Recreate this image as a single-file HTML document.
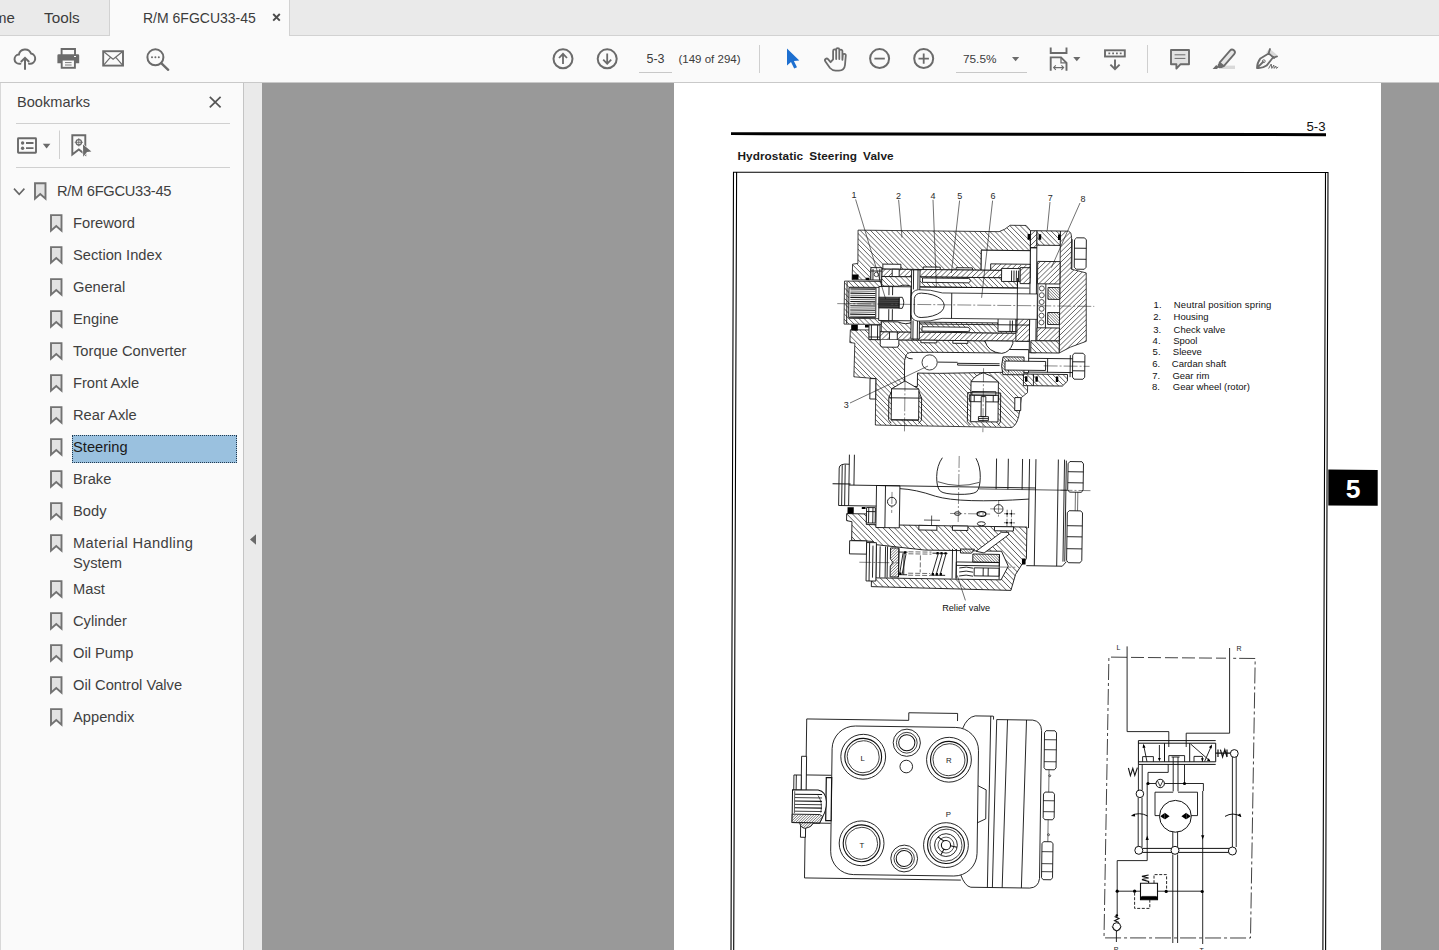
<!DOCTYPE html>
<html><head><meta charset="utf-8"><title>R/M 6FGCU33-45</title>
<style>
*{box-sizing:border-box;margin:0;padding:0}
html,body{width:1439px;height:950px;overflow:hidden;background:#999;font-family:"Liberation Sans",sans-serif;color:#3a3a3a}
.abs{position:absolute}
#tabbar{left:0;top:0;width:1439px;height:36px;background:#eaeaea;border-bottom:1px solid #d2d2d2}
#tab-active{left:109px;top:0;width:181px;height:36px;background:#fafafa;border-left:1px solid #d2d2d2;border-right:1px solid #d2d2d2}
.tabtxt{top:9px;font-size:15px;line-height:18px;color:#3c3c3c;white-space:nowrap}
#toolbar{left:0;top:36px;width:1439px;height:47px;background:#fafafa;border-bottom:1px solid #c9c9c9}
#sidebar{left:0;top:83px;width:244px;height:867px;background:#fafafa;border-right:1px solid #c4c4c4;border-left:1px solid #d8d8d8}
#splitter{left:244px;top:83px;width:18px;height:867px;background:#eaeaea}
#docbg{left:262px;top:83px;width:1177px;height:867px;background:#999}
#page{left:674px;top:83px;width:707px;height:867px;background:#fff}
.tbtxt{font-size:12.5px;color:#3c3c3c;white-space:nowrap;line-height:14px}
.bm{left:73px;font-size:14.7px;line-height:20px;color:#3f3f3f;white-space:nowrap}
.hr{left:16px;width:214px;height:1px;background:#d0d0d0}
svg{position:absolute;overflow:visible}
</style></head><body>
<div id="tabbar" class="abs"></div>
<div id="tab-active" class="abs"></div>
<div class="abs tabtxt" style="left:-6px">me</div>
<div class="abs tabtxt" style="left:44px;font-size:15.3px">Tools</div>
<div class="abs tabtxt" id="tabtitle" style="left:143px;font-size:14px">R/M 6FGCU33-45</div>
<div id="toolbar" class="abs"></div>
<div id="docbg" class="abs"></div>
<div id="page" class="abs"></div>
<div id="sidebar" class="abs"></div>
<div id="splitter" class="abs"></div>
<svg class="abs" style="left:0;top:0" width="1439" height="83" viewBox="0 0 1439 83">
<path d="M273.2,14 l6.6,6.6 M279.8,14 l-6.6,6.6" stroke="#4a4a4a" stroke-width="1.9"/>
<path d="M20.4,63.8 h-1 a4.6,4.6 0 0 1 -0.5,-9.2 a6.3,6.3 0 0 1 12.1,-1.1 a5.2,5.2 0 0 1 -1.1,10.3 h-0.9" fill="none" stroke="#6b6b6b" stroke-width="2" stroke-linecap="round"/><path d="M25,69.8 V58.4 M20.8,62 L25,57.8 L29.2,62" fill="none" stroke="#6b6b6b" stroke-width="2"/>
<path d="M61.6,55 V49 H75 V55" fill="none" stroke="#6b6b6b" stroke-width="1.9"/><path d="M57.4,55.4 a1.2,1.2 0 0 1 1.2,-1.2 h19.4 a1.2,1.2 0 0 1 1.2,1.2 v7.8 h-4.2 v-3.6 h-13.4 v3.6 h-4.2 z" fill="#6b6b6b"/><rect x="61.7" y="59.6" width="13.2" height="8.2" fill="#fafafa" stroke="#6b6b6b" stroke-width="1.9"/><path d="M65,62.6 h6.6 M65,65 h6.6" stroke="#6b6b6b" stroke-width="0.9"/><rect x="74" y="56" width="2" height="1" fill="#fafafa"/>
<rect x="103.2" y="51.2" width="19.8" height="14.4" fill="none" stroke="#6b6b6b" stroke-width="1.9"/><path d="M103.2,51.2 L113.1,59.2 L123,51.2 M103.2,65.6 L110.6,57.2 M123,65.6 L115.6,57.2" fill="none" stroke="#6b6b6b" stroke-width="1.2"/>
<circle cx="155.4" cy="57.3" r="8" fill="none" stroke="#6b6b6b" stroke-width="2"/><path d="M161.2,63.2 L168.2,69.8" stroke="#6b6b6b" stroke-width="2.4" stroke-linecap="round"/><circle cx="152" cy="57.3" r="1" fill="#6b6b6b"/><circle cx="155.4" cy="57.3" r="1" fill="#6b6b6b"/><circle cx="158.8" cy="57.3" r="1" fill="#6b6b6b"/>
<circle cx="563" cy="58.8" r="9.5" fill="none" stroke="#6b6b6b" stroke-width="2"/><path d="M563,64 V54 M559,58 L563,53.8 L567,58" fill="none" stroke="#6b6b6b" stroke-width="1.8"/>
<circle cx="607.2" cy="58.8" r="9.5" fill="none" stroke="#6b6b6b" stroke-width="2"/><path d="M607.2,53.6 V63.6 M603.2,59.6 L607.2,63.8 L611.2,59.6" fill="none" stroke="#6b6b6b" stroke-width="1.8"/>
<path d="M639,72.5 H672 M956,72.5 H1027" stroke="#c8c8c8" stroke-width="1"/><path d="M759.5,45 V73 M1147.5,45 V73" stroke="#cfcfcf" stroke-width="1"/>
<path d="M787,48.6 V65.6 L791,62 L794.2,68.6 L797,67.3 L793.9,60.9 L799.3,60.6 Z" fill="#1d6fd0"/>
<path d="M830.6,62.2 l-2.6,-3 a1.7,1.7 0 0 0 -2.6,2.2 l4.6,6.6 q2.4,2.6 5.6,2.6 h3.4 q5.4,0 6,-5.6 l0.8,-9.6 a1.5,1.5 0 0 0 -3,-0.2 l-0.4,4.6 v-8.6 a1.55,1.55 0 0 0 -3.1,0 v7.8 v-9.4 a1.55,1.55 0 0 0 -3.1,0 v9.4 v-8 a1.55,1.55 0 0 0 -3.1,0 v8.4 z" fill="none" stroke="#6b6b6b" stroke-width="1.8" stroke-linejoin="round"/>
<circle cx="879.6" cy="58.6" r="9.5" fill="none" stroke="#6b6b6b" stroke-width="2"/><path d="M874.4,58.6 h10.4" stroke="#6b6b6b" stroke-width="1.8"/><circle cx="923.7" cy="58.6" r="9.5" fill="none" stroke="#6b6b6b" stroke-width="2"/><path d="M918.5,58.6 h10.4 M923.7,53.4 v10.4" stroke="#6b6b6b" stroke-width="1.8"/>
<path d="M1012,57 h7.2 l-3.6,4.2 z M1073.2,57 h7.2 l-3.6,4.2 z" fill="#6b6b6b"/>
<path d="M1050.7,47.4 V53 H1066.5 V47.4" fill="none" stroke="#6b6b6b" stroke-width="1.9"/><path d="M1050.7,70.8 V57.4 H1061 L1066.5,62.8 V70.8" fill="none" stroke="#6b6b6b" stroke-width="1.9"/><path d="M1061,57.4 V62.8 H1066.5" fill="none" stroke="#6b6b6b" stroke-width="1.3"/><path d="M1053.6,67.6 H1063.6 M1055.8,65.4 L1053.6,67.6 L1055.8,69.8 M1061.4,65.4 L1063.6,67.6 L1061.4,69.8" fill="none" stroke="#6b6b6b" stroke-width="1.1"/>
<rect x="1105" y="50.3" width="19.8" height="6.2" fill="none" stroke="#6b6b6b" stroke-width="1.9"/><path d="M1108.4,53.4 h1.8 M1112.2,53.4 h1.8 M1116,53.4 h1.8 M1119.8,53.4 h1.8" stroke="#6b6b6b" stroke-width="1.6"/><path d="M1115,59.4 V69 M1110.4,64.6 L1115,69.2 L1119.6,64.6" fill="none" stroke="#6b6b6b" stroke-width="1.9"/>
<path d="M1171,50 H1189 V64.2 H1180.6 L1176.4,68.6 V64.2 H1171 Z" fill="#e2e2e2" stroke="#6b6b6b" stroke-width="1.9" stroke-linejoin="round"/><path d="M1174.6,54.8 h10.8 M1174.6,58.4 h10.8" stroke="#6b6b6b" stroke-width="1"/>
<rect x="1219" y="65.6" width="16" height="3.4" fill="#d9d9d9"/><path d="M1219.6,62.6 L1230,50.6 a2.7,2.7 0 0 1 4.2,3.6 L1223.8,66.2 Z" fill="#e6e6e6" stroke="#6b6b6b" stroke-width="1.8" stroke-linejoin="round"/><path d="M1219.2,62.4 l4.8,4 l-2,1.6 h-3.4 l-1.2,-1 l0.4,-2.6 z M1212.6,69 l3.6,-4 l2.4,2.2 l-1.6,1.8 z" fill="#6b6b6b"/>
<path d="M1269.4,48.6 l7.4,6.2 l-3.4,3.6 l-7.2,-6 z" fill="#d9d9d9"/><path d="M1270,49 l-1.4,4.4 l-8.2,5 q-3.4,4.6 -3.4,9.6 q5.4,0.6 9.6,-2.4 l6,-7.6 l4.4,-1.6 M1268.6,53.4 l5.6,4.6 M1257.4,67.6 l5.6,-5.6" fill="none" stroke="#6b6b6b" stroke-width="1.8" stroke-linejoin="round" stroke-linecap="round"/><circle cx="1263.8" cy="61.2" r="1.4" fill="none" stroke="#6b6b6b" stroke-width="1"/><path d="M1268.6,68.6 l2.6,-4.6 l0.6,4.4 l2,-3.4 l0.4,3.4 l1.6,-2.4 l0.6,2.4 l1.8,-1.4" fill="none" stroke="#6b6b6b" stroke-width="1"/>
</svg>
<div class="abs tbtxt" style="left:646.5px;top:52px">5-3</div>
<div class="abs tbtxt" style="left:678.5px;top:52px;font-size:11.5px">(149 of 294)</div>
<div class="abs tbtxt" style="left:963px;top:52px;font-size:11.8px">75.5%</div>
<!--ICONS-->
<svg class="abs" style="left:0;top:0" width="262" height="950" viewBox="0 0 262 950">
<path d="M209.8,96.8 L220.6,107.4 M220.6,96.8 L209.8,107.4" stroke="#555" stroke-width="1.7" fill="none"/>
<rect x="18" y="138.2" width="18" height="14.6" fill="none" stroke="#6a6a6a" stroke-width="1.9" rx="0.5"/><circle cx="22.6" cy="143" r="1.7" fill="#6a6a6a"/><circle cx="22.6" cy="148.2" r="1.7" fill="#6a6a6a"/><path d="M26,143 h7.5 M26,148.2 h7.5" stroke="#6a6a6a" stroke-width="1.8"/>
<path d="M42.8,143.8 h7.6 l-3.8,4.6 z" fill="#6a6a6a"/>
<path d="M59.5,130.5 V159" stroke="#d0d0d0" stroke-width="1"/>
<path d="M72.3,135.2 h13 v19.4 l-6.5,-5.2 l-6.5,5.2 z" fill="none" stroke="#6a6a6a" stroke-width="1.9"/><circle cx="78.8" cy="142.3" r="2.7" fill="none" stroke="#6a6a6a" stroke-width="1.3"/><path d="M78.8,138.2 v8.2 M74.7,142.3 h8.2" stroke="#6a6a6a" stroke-width="0.9"/><path d="M83,144.6 l8.4,6.8 l-4.4,0.7 l-3.8,4.6 z" fill="#6a6a6a" stroke="#fafafa" stroke-width="1.2" paint-order="stroke"/>
<path d="M14,188.6 l5.2,5.6 l5.2,-5.6" fill="none" stroke="#666" stroke-width="1.6"/>
<path d="M35,183.2 h10.5 v15.5 l-5.25,-4.6 l-5.25,4.6 z" fill="#e2e2e2" stroke="#727272" stroke-width="1.9" stroke-linejoin="miter"/>
<path d="M51,215.1 h10.5 v15.5 l-5.25,-4.6 l-5.25,4.6 z" fill="#e2e2e2" stroke="#727272" stroke-width="1.9" stroke-linejoin="miter"/>
<path d="M51,247.1 h10.5 v15.5 l-5.25,-4.6 l-5.25,4.6 z" fill="#e2e2e2" stroke="#727272" stroke-width="1.9" stroke-linejoin="miter"/>
<path d="M51,279.1 h10.5 v15.5 l-5.25,-4.6 l-5.25,4.6 z" fill="#e2e2e2" stroke="#727272" stroke-width="1.9" stroke-linejoin="miter"/>
<path d="M51,311.1 h10.5 v15.5 l-5.25,-4.6 l-5.25,4.6 z" fill="#e2e2e2" stroke="#727272" stroke-width="1.9" stroke-linejoin="miter"/>
<path d="M51,343.1 h10.5 v15.5 l-5.25,-4.6 l-5.25,4.6 z" fill="#e2e2e2" stroke="#727272" stroke-width="1.9" stroke-linejoin="miter"/>
<path d="M51,375.1 h10.5 v15.5 l-5.25,-4.6 l-5.25,4.6 z" fill="#e2e2e2" stroke="#727272" stroke-width="1.9" stroke-linejoin="miter"/>
<path d="M51,407.1 h10.5 v15.5 l-5.25,-4.6 l-5.25,4.6 z" fill="#e2e2e2" stroke="#727272" stroke-width="1.9" stroke-linejoin="miter"/>
<path d="M51,439.1 h10.5 v15.5 l-5.25,-4.6 l-5.25,4.6 z" fill="#e2e2e2" stroke="#727272" stroke-width="1.9" stroke-linejoin="miter"/>
<path d="M51,471.1 h10.5 v15.5 l-5.25,-4.6 l-5.25,4.6 z" fill="#e2e2e2" stroke="#727272" stroke-width="1.9" stroke-linejoin="miter"/>
<path d="M51,503.1 h10.5 v15.5 l-5.25,-4.6 l-5.25,4.6 z" fill="#e2e2e2" stroke="#727272" stroke-width="1.9" stroke-linejoin="miter"/>
<path d="M51,535.1 h10.5 v15.5 l-5.25,-4.6 l-5.25,4.6 z" fill="#e2e2e2" stroke="#727272" stroke-width="1.9" stroke-linejoin="miter"/>
<path d="M51,581.1 h10.5 v15.5 l-5.25,-4.6 l-5.25,4.6 z" fill="#e2e2e2" stroke="#727272" stroke-width="1.9" stroke-linejoin="miter"/>
<path d="M51,613.1 h10.5 v15.5 l-5.25,-4.6 l-5.25,4.6 z" fill="#e2e2e2" stroke="#727272" stroke-width="1.9" stroke-linejoin="miter"/>
<path d="M51,645.1 h10.5 v15.5 l-5.25,-4.6 l-5.25,4.6 z" fill="#e2e2e2" stroke="#727272" stroke-width="1.9" stroke-linejoin="miter"/>
<path d="M51,677.1 h10.5 v15.5 l-5.25,-4.6 l-5.25,4.6 z" fill="#e2e2e2" stroke="#727272" stroke-width="1.9" stroke-linejoin="miter"/>
<path d="M51,709.1 h10.5 v15.5 l-5.25,-4.6 l-5.25,4.6 z" fill="#e2e2e2" stroke="#727272" stroke-width="1.9" stroke-linejoin="miter"/>
<path d="M250,539.5 L256,534.3 V544.8 z" fill="#6a6a6a"/>
</svg>
<div class="abs" style="left:17px;top:92px;font-size:14.6px;line-height:20px;color:#3f3f3f">Bookmarks</div>
<div class="abs hr" style="top:123px"></div><div class="abs hr" style="top:167px"></div>
<div class="abs" style="left:72px;top:435px;width:165px;height:28px;background:#9ac1df;border:1px dotted #223a50"></div>
<div class="abs bm" style="left:57px;top:181px;letter-spacing:-0.3px">R/M 6FGCU33-45</div>
<div class="abs bm" style="top:213px">Foreword</div>
<div class="abs bm" style="top:245px">Section Index</div>
<div class="abs bm" style="top:277px">General</div>
<div class="abs bm" style="top:309px">Engine</div>
<div class="abs bm" style="top:341px">Torque Converter</div>
<div class="abs bm" style="top:373px">Front Axle</div>
<div class="abs bm" style="top:405px">Rear Axle</div>
<div class="abs bm" style="top:437px;color:#1a1a1a">Steering</div>
<div class="abs bm" style="top:469px">Brake</div>
<div class="abs bm" style="top:501px">Body</div>
<div class="abs bm" style="top:533px"><span style="letter-spacing:0.35px">Material Handling</span><br>System</div>
<div class="abs bm" style="top:579px">Mast</div>
<div class="abs bm" style="top:611px">Cylinder</div>
<div class="abs bm" style="top:643px">Oil Pump</div>
<div class="abs bm" style="top:675px">Oil Control Valve</div>
<div class="abs bm" style="top:707px">Appendix</div>
<!--SIDEBAR-->
<div class="abs" id="pagewrap" style="left:674px;top:83px;width:707px;height:867px;overflow:hidden">
<svg id="pg" style="left:-674px;top:-83px" width="1439" height="950" viewBox="0 0 1439 950" font-family="Liberation Sans, sans-serif">
<defs>
<path id="HA" d="M836.0,634.8L841.2,640.0M836.0,629.6L846.4,640.0M836.0,624.4L851.6,640.0M836.0,619.2L856.8,640.0M836.0,614.0L862.0,640.0M836.0,608.8L867.2,640.0M836.0,603.6L872.4,640.0M836.0,598.4L877.6,640.0M836.0,593.2L882.8,640.0M836.0,588.0L888.0,640.0M836.0,582.8L893.2,640.0M836.0,577.6L898.4,640.0M836.0,572.4L903.6,640.0M836.0,567.2L908.8,640.0M836.0,562.0L914.0,640.0M836.0,556.8L919.2,640.0M836.0,551.6L924.4,640.0M836.0,546.4L929.6,640.0M836.0,541.2L934.8,640.0M836.0,536.0L940.0,640.0M836.0,530.8L945.2,640.0M836.0,525.6L950.4,640.0M836.0,520.4L955.6,640.0M836.0,515.2L960.8,640.0M836.0,510.0L966.0,640.0M836.0,504.8L971.2,640.0M836.0,499.6L976.4,640.0M836.0,494.4L981.6,640.0M836.0,489.2L986.8,640.0M836.0,484.0L992.0,640.0M836.0,478.8L997.2,640.0M836.0,473.6L1002.4,640.0M836.0,468.4L1007.6,640.0M836.0,463.2L1012.8,640.0M836.0,458.0L1018.0,640.0M836.0,452.8L1023.2,640.0M836.0,447.6L1028.4,640.0M836.0,442.4L1033.6,640.0M836.0,437.2L1038.8,640.0M836.0,432.0L1044.0,640.0M836.0,426.8L1049.2,640.0M836.0,421.6L1054.4,640.0M836.0,416.4L1059.6,640.0M836.0,411.2L1064.8,640.0M836.0,406.0L1070.0,640.0M836.0,400.8L1075.2,640.0M836.0,395.6L1080.4,640.0M836.0,390.4L1085.6,640.0M836.0,385.2L1090.8,640.0M836.0,380.0L1096.0,640.0M836.0,374.8L1100.0,638.8M836.0,369.6L1100.0,633.6M836.0,364.4L1100.0,628.4M836.0,359.2L1100.0,623.2M836.0,354.0L1100.0,618.0M836.0,348.8L1100.0,612.8M836.0,343.6L1100.0,607.6M836.0,338.4L1100.0,602.4M836.0,333.2L1100.0,597.2M836.0,328.0L1100.0,592.0M836.0,322.8L1100.0,586.8M836.0,317.6L1100.0,581.6M836.0,312.4L1100.0,576.4M836.0,307.2L1100.0,571.2M836.0,302.0L1100.0,566.0M836.0,296.8L1100.0,560.8M836.0,291.6L1100.0,555.6M836.0,286.4L1100.0,550.4M836.0,281.2L1100.0,545.2M836.0,276.0L1100.0,540.0M836.0,270.8L1100.0,534.8M836.0,265.6L1100.0,529.6M836.0,260.4L1100.0,524.4M836.0,255.2L1100.0,519.2M836.0,250.0L1100.0,514.0M836.0,244.8L1100.0,508.8M836.0,239.6L1100.0,503.6M836.0,234.4L1100.0,498.4M836.0,229.2L1100.0,493.2M836.0,224.0L1100.0,488.0M837.2,220.0L1100.0,482.8M842.4,220.0L1100.0,477.6M847.6,220.0L1100.0,472.4M852.8,220.0L1100.0,467.2M858.0,220.0L1100.0,462.0M863.2,220.0L1100.0,456.8M868.4,220.0L1100.0,451.6M873.6,220.0L1100.0,446.4M878.8,220.0L1100.0,441.2M884.0,220.0L1100.0,436.0M889.2,220.0L1100.0,430.8M894.4,220.0L1100.0,425.6M899.6,220.0L1100.0,420.4M904.8,220.0L1100.0,415.2M910.0,220.0L1100.0,410.0M915.2,220.0L1100.0,404.8M920.4,220.0L1100.0,399.6M925.6,220.0L1100.0,394.4M930.8,220.0L1100.0,389.2M936.0,220.0L1100.0,384.0M941.2,220.0L1100.0,378.8M946.4,220.0L1100.0,373.6M951.6,220.0L1100.0,368.4M956.8,220.0L1100.0,363.2M962.0,220.0L1100.0,358.0M967.2,220.0L1100.0,352.8M972.4,220.0L1100.0,347.6M977.6,220.0L1100.0,342.4M982.8,220.0L1100.0,337.2M988.0,220.0L1100.0,332.0M993.2,220.0L1100.0,326.8M998.4,220.0L1100.0,321.6M1003.6,220.0L1100.0,316.4M1008.8,220.0L1100.0,311.2M1014.0,220.0L1100.0,306.0M1019.2,220.0L1100.0,300.8M1024.4,220.0L1100.0,295.6M1029.6,220.0L1100.0,290.4M1034.8,220.0L1100.0,285.2M1040.0,220.0L1100.0,280.0M1045.2,220.0L1100.0,274.8M1050.4,220.0L1100.0,269.6M1055.6,220.0L1100.0,264.4M1060.8,220.0L1100.0,259.2M1066.0,220.0L1100.0,254.0M1071.2,220.0L1100.0,248.8M1076.4,220.0L1100.0,243.6M1081.6,220.0L1100.0,238.4M1086.8,220.0L1100.0,233.2M1092.0,220.0L1100.0,228.0M1097.2,220.0L1100.0,222.8" stroke="#222" stroke-width="0.7" fill="none"/>
<path id="HB" d="M841.2,220.0L836.0,225.2M846.4,220.0L836.0,230.4M851.6,220.0L836.0,235.6M856.8,220.0L836.0,240.8M862.0,220.0L836.0,246.0M867.2,220.0L836.0,251.2M872.4,220.0L836.0,256.4M877.6,220.0L836.0,261.6M882.8,220.0L836.0,266.8M888.0,220.0L836.0,272.0M893.2,220.0L836.0,277.2M898.4,220.0L836.0,282.4M903.6,220.0L836.0,287.6M908.8,220.0L836.0,292.8M914.0,220.0L836.0,298.0M919.2,220.0L836.0,303.2M924.4,220.0L836.0,308.4M929.6,220.0L836.0,313.6M934.8,220.0L836.0,318.8M940.0,220.0L836.0,324.0M945.2,220.0L836.0,329.2M950.4,220.0L836.0,334.4M955.6,220.0L836.0,339.6M960.8,220.0L836.0,344.8M966.0,220.0L836.0,350.0M971.2,220.0L836.0,355.2M976.4,220.0L836.0,360.4M981.6,220.0L836.0,365.6M986.8,220.0L836.0,370.8M992.0,220.0L836.0,376.0M997.2,220.0L836.0,381.2M1002.4,220.0L836.0,386.4M1007.6,220.0L836.0,391.6M1012.8,220.0L836.0,396.8M1018.0,220.0L836.0,402.0M1023.2,220.0L836.0,407.2M1028.4,220.0L836.0,412.4M1033.6,220.0L836.0,417.6M1038.8,220.0L836.0,422.8M1044.0,220.0L836.0,428.0M1049.2,220.0L836.0,433.2M1054.4,220.0L836.0,438.4M1059.6,220.0L836.0,443.6M1064.8,220.0L836.0,448.8M1070.0,220.0L836.0,454.0M1075.2,220.0L836.0,459.2M1080.4,220.0L836.0,464.4M1085.6,220.0L836.0,469.6M1090.8,220.0L836.0,474.8M1096.0,220.0L836.0,480.0M1100.0,221.2L836.0,485.2M1100.0,226.4L836.0,490.4M1100.0,231.6L836.0,495.6M1100.0,236.8L836.0,500.8M1100.0,242.0L836.0,506.0M1100.0,247.2L836.0,511.2M1100.0,252.4L836.0,516.4M1100.0,257.6L836.0,521.6M1100.0,262.8L836.0,526.8M1100.0,268.0L836.0,532.0M1100.0,273.2L836.0,537.2M1100.0,278.4L836.0,542.4M1100.0,283.6L836.0,547.6M1100.0,288.8L836.0,552.8M1100.0,294.0L836.0,558.0M1100.0,299.2L836.0,563.2M1100.0,304.4L836.0,568.4M1100.0,309.6L836.0,573.6M1100.0,314.8L836.0,578.8M1100.0,320.0L836.0,584.0M1100.0,325.2L836.0,589.2M1100.0,330.4L836.0,594.4M1100.0,335.6L836.0,599.6M1100.0,340.8L836.0,604.8M1100.0,346.0L836.0,610.0M1100.0,351.2L836.0,615.2M1100.0,356.4L836.0,620.4M1100.0,361.6L836.0,625.6M1100.0,366.8L836.0,630.8M1100.0,372.0L836.0,636.0M1100.0,377.2L837.2,640.0M1100.0,382.4L842.4,640.0M1100.0,387.6L847.6,640.0M1100.0,392.8L852.8,640.0M1100.0,398.0L858.0,640.0M1100.0,403.2L863.2,640.0M1100.0,408.4L868.4,640.0M1100.0,413.6L873.6,640.0M1100.0,418.8L878.8,640.0M1100.0,424.0L884.0,640.0M1100.0,429.2L889.2,640.0M1100.0,434.4L894.4,640.0M1100.0,439.6L899.6,640.0M1100.0,444.8L904.8,640.0M1100.0,450.0L910.0,640.0M1100.0,455.2L915.2,640.0M1100.0,460.4L920.4,640.0M1100.0,465.6L925.6,640.0M1100.0,470.8L930.8,640.0M1100.0,476.0L936.0,640.0M1100.0,481.2L941.2,640.0M1100.0,486.4L946.4,640.0M1100.0,491.6L951.6,640.0M1100.0,496.8L956.8,640.0M1100.0,502.0L962.0,640.0M1100.0,507.2L967.2,640.0M1100.0,512.4L972.4,640.0M1100.0,517.6L977.6,640.0M1100.0,522.8L982.8,640.0M1100.0,528.0L988.0,640.0M1100.0,533.2L993.2,640.0M1100.0,538.4L998.4,640.0M1100.0,543.6L1003.6,640.0M1100.0,548.8L1008.8,640.0M1100.0,554.0L1014.0,640.0M1100.0,559.2L1019.2,640.0M1100.0,564.4L1024.4,640.0M1100.0,569.6L1029.6,640.0M1100.0,574.8L1034.8,640.0M1100.0,580.0L1040.0,640.0M1100.0,585.2L1045.2,640.0M1100.0,590.4L1050.4,640.0M1100.0,595.6L1055.6,640.0M1100.0,600.8L1060.8,640.0M1100.0,606.0L1066.0,640.0M1100.0,611.2L1071.2,640.0M1100.0,616.4L1076.4,640.0M1100.0,621.6L1081.6,640.0M1100.0,626.8L1086.8,640.0M1100.0,632.0L1092.0,640.0M1100.0,637.2L1097.2,640.0" stroke="#222" stroke-width="0.7" fill="none"/>
<path id="HC" d="M836.0,637.2L838.8,640.0M836.0,634.4L841.6,640.0M836.0,631.6L844.4,640.0M836.0,628.8L847.2,640.0M836.0,626.0L850.0,640.0M836.0,623.2L852.8,640.0M836.0,620.4L855.6,640.0M836.0,617.6L858.4,640.0M836.0,614.8L861.2,640.0M836.0,612.0L864.0,640.0M836.0,609.2L866.8,640.0M836.0,606.4L869.6,640.0M836.0,603.6L872.4,640.0M836.0,600.8L875.2,640.0M836.0,598.0L878.0,640.0M836.0,595.2L880.8,640.0M836.0,592.4L883.6,640.0M836.0,589.6L886.4,640.0M836.0,586.8L889.2,640.0M836.0,584.0L892.0,640.0M836.0,581.2L894.8,640.0M836.0,578.4L897.6,640.0M836.0,575.6L900.4,640.0M836.0,572.8L903.2,640.0M836.0,570.0L906.0,640.0M836.0,567.2L908.8,640.0M836.0,564.4L911.6,640.0M836.0,561.6L914.4,640.0M836.0,558.8L917.2,640.0M836.0,556.0L920.0,640.0M836.0,553.2L922.8,640.0M836.0,550.4L925.6,640.0M836.0,547.6L928.4,640.0M836.0,544.8L931.2,640.0M836.0,542.0L934.0,640.0M836.0,539.2L936.8,640.0M836.0,536.4L939.6,640.0M836.0,533.6L942.4,640.0M836.0,530.8L945.2,640.0M836.0,528.0L948.0,640.0M836.0,525.2L950.8,640.0M836.0,522.4L953.6,640.0M836.0,519.6L956.4,640.0M836.0,516.8L959.2,640.0M836.0,514.0L962.0,640.0M836.0,511.2L964.8,640.0M836.0,508.4L967.6,640.0M836.0,505.6L970.4,640.0M836.0,502.8L973.2,640.0M836.0,500.0L976.0,640.0M836.0,497.2L978.8,640.0M836.0,494.4L981.6,640.0M836.0,491.6L984.4,640.0M836.0,488.8L987.2,640.0M836.0,486.0L990.0,640.0M836.0,483.2L992.8,640.0M836.0,480.4L995.6,640.0M836.0,477.6L998.4,640.0M836.0,474.8L1001.2,640.0M836.0,472.0L1004.0,640.0M836.0,469.2L1006.8,640.0M836.0,466.4L1009.6,640.0M836.0,463.6L1012.4,640.0M836.0,460.8L1015.2,640.0M836.0,458.0L1018.0,640.0M836.0,455.2L1020.8,640.0M836.0,452.4L1023.6,640.0M836.0,449.6L1026.4,640.0M836.0,446.8L1029.2,640.0M836.0,444.0L1032.0,640.0M836.0,441.2L1034.8,640.0M836.0,438.4L1037.6,640.0M836.0,435.6L1040.4,640.0M836.0,432.8L1043.2,640.0M836.0,430.0L1046.0,640.0M836.0,427.2L1048.8,640.0M836.0,424.4L1051.6,640.0M836.0,421.6L1054.4,640.0M836.0,418.8L1057.2,640.0M836.0,416.0L1060.0,640.0M836.0,413.2L1062.8,640.0M836.0,410.4L1065.6,640.0M836.0,407.6L1068.4,640.0M836.0,404.8L1071.2,640.0M836.0,402.0L1074.0,640.0M836.0,399.2L1076.8,640.0M836.0,396.4L1079.6,640.0M836.0,393.6L1082.4,640.0M836.0,390.8L1085.2,640.0M836.0,388.0L1088.0,640.0M836.0,385.2L1090.8,640.0M836.0,382.4L1093.6,640.0M836.0,379.6L1096.4,640.0M836.0,376.8L1099.2,640.0M836.0,374.0L1100.0,638.0M836.0,371.2L1100.0,635.2M836.0,368.4L1100.0,632.4M836.0,365.6L1100.0,629.6M836.0,362.8L1100.0,626.8M836.0,360.0L1100.0,624.0M836.0,357.2L1100.0,621.2M836.0,354.4L1100.0,618.4M836.0,351.6L1100.0,615.6M836.0,348.8L1100.0,612.8M836.0,346.0L1100.0,610.0M836.0,343.2L1100.0,607.2M836.0,340.4L1100.0,604.4M836.0,337.6L1100.0,601.6M836.0,334.8L1100.0,598.8M836.0,332.0L1100.0,596.0M836.0,329.2L1100.0,593.2M836.0,326.4L1100.0,590.4M836.0,323.6L1100.0,587.6M836.0,320.8L1100.0,584.8M836.0,318.0L1100.0,582.0M836.0,315.2L1100.0,579.2M836.0,312.4L1100.0,576.4M836.0,309.6L1100.0,573.6M836.0,306.8L1100.0,570.8M836.0,304.0L1100.0,568.0M836.0,301.2L1100.0,565.2M836.0,298.4L1100.0,562.4M836.0,295.6L1100.0,559.6M836.0,292.8L1100.0,556.8M836.0,290.0L1100.0,554.0M836.0,287.2L1100.0,551.2M836.0,284.4L1100.0,548.4M836.0,281.6L1100.0,545.6M836.0,278.8L1100.0,542.8M836.0,276.0L1100.0,540.0M836.0,273.2L1100.0,537.2M836.0,270.4L1100.0,534.4M836.0,267.6L1100.0,531.6M836.0,264.8L1100.0,528.8M836.0,262.0L1100.0,526.0M836.0,259.2L1100.0,523.2M836.0,256.4L1100.0,520.4M836.0,253.6L1100.0,517.6M836.0,250.8L1100.0,514.8M836.0,248.0L1100.0,512.0M836.0,245.2L1100.0,509.2M836.0,242.4L1100.0,506.4M836.0,239.6L1100.0,503.6M836.0,236.8L1100.0,500.8M836.0,234.0L1100.0,498.0M836.0,231.2L1100.0,495.2M836.0,228.4L1100.0,492.4M836.0,225.6L1100.0,489.6M836.0,222.8L1100.0,486.8M836.0,220.0L1100.0,484.0M838.8,220.0L1100.0,481.2M841.6,220.0L1100.0,478.4M844.4,220.0L1100.0,475.6M847.2,220.0L1100.0,472.8M850.0,220.0L1100.0,470.0M852.8,220.0L1100.0,467.2M855.6,220.0L1100.0,464.4M858.4,220.0L1100.0,461.6M861.2,220.0L1100.0,458.8M864.0,220.0L1100.0,456.0M866.8,220.0L1100.0,453.2M869.6,220.0L1100.0,450.4M872.4,220.0L1100.0,447.6M875.2,220.0L1100.0,444.8M878.0,220.0L1100.0,442.0M880.8,220.0L1100.0,439.2M883.6,220.0L1100.0,436.4M886.4,220.0L1100.0,433.6M889.2,220.0L1100.0,430.8M892.0,220.0L1100.0,428.0M894.8,220.0L1100.0,425.2M897.6,220.0L1100.0,422.4M900.4,220.0L1100.0,419.6M903.2,220.0L1100.0,416.8M906.0,220.0L1100.0,414.0M908.8,220.0L1100.0,411.2M911.6,220.0L1100.0,408.4M914.4,220.0L1100.0,405.6M917.2,220.0L1100.0,402.8M920.0,220.0L1100.0,400.0M922.8,220.0L1100.0,397.2M925.6,220.0L1100.0,394.4M928.4,220.0L1100.0,391.6M931.2,220.0L1100.0,388.8M934.0,220.0L1100.0,386.0M936.8,220.0L1100.0,383.2M939.6,220.0L1100.0,380.4M942.4,220.0L1100.0,377.6M945.2,220.0L1100.0,374.8M948.0,220.0L1100.0,372.0M950.8,220.0L1100.0,369.2M953.6,220.0L1100.0,366.4M956.4,220.0L1100.0,363.6M959.2,220.0L1100.0,360.8M962.0,220.0L1100.0,358.0M964.8,220.0L1100.0,355.2M967.6,220.0L1100.0,352.4M970.4,220.0L1100.0,349.6M973.2,220.0L1100.0,346.8M976.0,220.0L1100.0,344.0M978.8,220.0L1100.0,341.2M981.6,220.0L1100.0,338.4M984.4,220.0L1100.0,335.6M987.2,220.0L1100.0,332.8M990.0,220.0L1100.0,330.0M992.8,220.0L1100.0,327.2M995.6,220.0L1100.0,324.4M998.4,220.0L1100.0,321.6M1001.2,220.0L1100.0,318.8M1004.0,220.0L1100.0,316.0M1006.8,220.0L1100.0,313.2M1009.6,220.0L1100.0,310.4M1012.4,220.0L1100.0,307.6M1015.2,220.0L1100.0,304.8M1018.0,220.0L1100.0,302.0M1020.8,220.0L1100.0,299.2M1023.6,220.0L1100.0,296.4M1026.4,220.0L1100.0,293.6M1029.2,220.0L1100.0,290.8M1032.0,220.0L1100.0,288.0M1034.8,220.0L1100.0,285.2M1037.6,220.0L1100.0,282.4M1040.4,220.0L1100.0,279.6M1043.2,220.0L1100.0,276.8M1046.0,220.0L1100.0,274.0M1048.8,220.0L1100.0,271.2M1051.6,220.0L1100.0,268.4M1054.4,220.0L1100.0,265.6M1057.2,220.0L1100.0,262.8M1060.0,220.0L1100.0,260.0M1062.8,220.0L1100.0,257.2M1065.6,220.0L1100.0,254.4M1068.4,220.0L1100.0,251.6M1071.2,220.0L1100.0,248.8M1074.0,220.0L1100.0,246.0M1076.8,220.0L1100.0,243.2M1079.6,220.0L1100.0,240.4M1082.4,220.0L1100.0,237.6M1085.2,220.0L1100.0,234.8M1088.0,220.0L1100.0,232.0M1090.8,220.0L1100.0,229.2M1093.6,220.0L1100.0,226.4M1096.4,220.0L1100.0,223.6M1099.2,220.0L1100.0,220.8" stroke="#222" stroke-width="0.6" fill="none"/>
<path id="HD" d="M838.8,220.0L836.0,222.8M841.6,220.0L836.0,225.6M844.4,220.0L836.0,228.4M847.2,220.0L836.0,231.2M850.0,220.0L836.0,234.0M852.8,220.0L836.0,236.8M855.6,220.0L836.0,239.6M858.4,220.0L836.0,242.4M861.2,220.0L836.0,245.2M864.0,220.0L836.0,248.0M866.8,220.0L836.0,250.8M869.6,220.0L836.0,253.6M872.4,220.0L836.0,256.4M875.2,220.0L836.0,259.2M878.0,220.0L836.0,262.0M880.8,220.0L836.0,264.8M883.6,220.0L836.0,267.6M886.4,220.0L836.0,270.4M889.2,220.0L836.0,273.2M892.0,220.0L836.0,276.0M894.8,220.0L836.0,278.8M897.6,220.0L836.0,281.6M900.4,220.0L836.0,284.4M903.2,220.0L836.0,287.2M906.0,220.0L836.0,290.0M908.8,220.0L836.0,292.8M911.6,220.0L836.0,295.6M914.4,220.0L836.0,298.4M917.2,220.0L836.0,301.2M920.0,220.0L836.0,304.0M922.8,220.0L836.0,306.8M925.6,220.0L836.0,309.6M928.4,220.0L836.0,312.4M931.2,220.0L836.0,315.2M934.0,220.0L836.0,318.0M936.8,220.0L836.0,320.8M939.6,220.0L836.0,323.6M942.4,220.0L836.0,326.4M945.2,220.0L836.0,329.2M948.0,220.0L836.0,332.0M950.8,220.0L836.0,334.8M953.6,220.0L836.0,337.6M956.4,220.0L836.0,340.4M959.2,220.0L836.0,343.2M962.0,220.0L836.0,346.0M964.8,220.0L836.0,348.8M967.6,220.0L836.0,351.6M970.4,220.0L836.0,354.4M973.2,220.0L836.0,357.2M976.0,220.0L836.0,360.0M978.8,220.0L836.0,362.8M981.6,220.0L836.0,365.6M984.4,220.0L836.0,368.4M987.2,220.0L836.0,371.2M990.0,220.0L836.0,374.0M992.8,220.0L836.0,376.8M995.6,220.0L836.0,379.6M998.4,220.0L836.0,382.4M1001.2,220.0L836.0,385.2M1004.0,220.0L836.0,388.0M1006.8,220.0L836.0,390.8M1009.6,220.0L836.0,393.6M1012.4,220.0L836.0,396.4M1015.2,220.0L836.0,399.2M1018.0,220.0L836.0,402.0M1020.8,220.0L836.0,404.8M1023.6,220.0L836.0,407.6M1026.4,220.0L836.0,410.4M1029.2,220.0L836.0,413.2M1032.0,220.0L836.0,416.0M1034.8,220.0L836.0,418.8M1037.6,220.0L836.0,421.6M1040.4,220.0L836.0,424.4M1043.2,220.0L836.0,427.2M1046.0,220.0L836.0,430.0M1048.8,220.0L836.0,432.8M1051.6,220.0L836.0,435.6M1054.4,220.0L836.0,438.4M1057.2,220.0L836.0,441.2M1060.0,220.0L836.0,444.0M1062.8,220.0L836.0,446.8M1065.6,220.0L836.0,449.6M1068.4,220.0L836.0,452.4M1071.2,220.0L836.0,455.2M1074.0,220.0L836.0,458.0M1076.8,220.0L836.0,460.8M1079.6,220.0L836.0,463.6M1082.4,220.0L836.0,466.4M1085.2,220.0L836.0,469.2M1088.0,220.0L836.0,472.0M1090.8,220.0L836.0,474.8M1093.6,220.0L836.0,477.6M1096.4,220.0L836.0,480.4M1099.2,220.0L836.0,483.2M1100.0,222.0L836.0,486.0M1100.0,224.8L836.0,488.8M1100.0,227.6L836.0,491.6M1100.0,230.4L836.0,494.4M1100.0,233.2L836.0,497.2M1100.0,236.0L836.0,500.0M1100.0,238.8L836.0,502.8M1100.0,241.6L836.0,505.6M1100.0,244.4L836.0,508.4M1100.0,247.2L836.0,511.2M1100.0,250.0L836.0,514.0M1100.0,252.8L836.0,516.8M1100.0,255.6L836.0,519.6M1100.0,258.4L836.0,522.4M1100.0,261.2L836.0,525.2M1100.0,264.0L836.0,528.0M1100.0,266.8L836.0,530.8M1100.0,269.6L836.0,533.6M1100.0,272.4L836.0,536.4M1100.0,275.2L836.0,539.2M1100.0,278.0L836.0,542.0M1100.0,280.8L836.0,544.8M1100.0,283.6L836.0,547.6M1100.0,286.4L836.0,550.4M1100.0,289.2L836.0,553.2M1100.0,292.0L836.0,556.0M1100.0,294.8L836.0,558.8M1100.0,297.6L836.0,561.6M1100.0,300.4L836.0,564.4M1100.0,303.2L836.0,567.2M1100.0,306.0L836.0,570.0M1100.0,308.8L836.0,572.8M1100.0,311.6L836.0,575.6M1100.0,314.4L836.0,578.4M1100.0,317.2L836.0,581.2M1100.0,320.0L836.0,584.0M1100.0,322.8L836.0,586.8M1100.0,325.6L836.0,589.6M1100.0,328.4L836.0,592.4M1100.0,331.2L836.0,595.2M1100.0,334.0L836.0,598.0M1100.0,336.8L836.0,600.8M1100.0,339.6L836.0,603.6M1100.0,342.4L836.0,606.4M1100.0,345.2L836.0,609.2M1100.0,348.0L836.0,612.0M1100.0,350.8L836.0,614.8M1100.0,353.6L836.0,617.6M1100.0,356.4L836.0,620.4M1100.0,359.2L836.0,623.2M1100.0,362.0L836.0,626.0M1100.0,364.8L836.0,628.8M1100.0,367.6L836.0,631.6M1100.0,370.4L836.0,634.4M1100.0,373.2L836.0,637.2M1100.0,376.0L836.0,640.0M1100.0,378.8L838.8,640.0M1100.0,381.6L841.6,640.0M1100.0,384.4L844.4,640.0M1100.0,387.2L847.2,640.0M1100.0,390.0L850.0,640.0M1100.0,392.8L852.8,640.0M1100.0,395.6L855.6,640.0M1100.0,398.4L858.4,640.0M1100.0,401.2L861.2,640.0M1100.0,404.0L864.0,640.0M1100.0,406.8L866.8,640.0M1100.0,409.6L869.6,640.0M1100.0,412.4L872.4,640.0M1100.0,415.2L875.2,640.0M1100.0,418.0L878.0,640.0M1100.0,420.8L880.8,640.0M1100.0,423.6L883.6,640.0M1100.0,426.4L886.4,640.0M1100.0,429.2L889.2,640.0M1100.0,432.0L892.0,640.0M1100.0,434.8L894.8,640.0M1100.0,437.6L897.6,640.0M1100.0,440.4L900.4,640.0M1100.0,443.2L903.2,640.0M1100.0,446.0L906.0,640.0M1100.0,448.8L908.8,640.0M1100.0,451.6L911.6,640.0M1100.0,454.4L914.4,640.0M1100.0,457.2L917.2,640.0M1100.0,460.0L920.0,640.0M1100.0,462.8L922.8,640.0M1100.0,465.6L925.6,640.0M1100.0,468.4L928.4,640.0M1100.0,471.2L931.2,640.0M1100.0,474.0L934.0,640.0M1100.0,476.8L936.8,640.0M1100.0,479.6L939.6,640.0M1100.0,482.4L942.4,640.0M1100.0,485.2L945.2,640.0M1100.0,488.0L948.0,640.0M1100.0,490.8L950.8,640.0M1100.0,493.6L953.6,640.0M1100.0,496.4L956.4,640.0M1100.0,499.2L959.2,640.0M1100.0,502.0L962.0,640.0M1100.0,504.8L964.8,640.0M1100.0,507.6L967.6,640.0M1100.0,510.4L970.4,640.0M1100.0,513.2L973.2,640.0M1100.0,516.0L976.0,640.0M1100.0,518.8L978.8,640.0M1100.0,521.6L981.6,640.0M1100.0,524.4L984.4,640.0M1100.0,527.2L987.2,640.0M1100.0,530.0L990.0,640.0M1100.0,532.8L992.8,640.0M1100.0,535.6L995.6,640.0M1100.0,538.4L998.4,640.0M1100.0,541.2L1001.2,640.0M1100.0,544.0L1004.0,640.0M1100.0,546.8L1006.8,640.0M1100.0,549.6L1009.6,640.0M1100.0,552.4L1012.4,640.0M1100.0,555.2L1015.2,640.0M1100.0,558.0L1018.0,640.0M1100.0,560.8L1020.8,640.0M1100.0,563.6L1023.6,640.0M1100.0,566.4L1026.4,640.0M1100.0,569.2L1029.2,640.0M1100.0,572.0L1032.0,640.0M1100.0,574.8L1034.8,640.0M1100.0,577.6L1037.6,640.0M1100.0,580.4L1040.4,640.0M1100.0,583.2L1043.2,640.0M1100.0,586.0L1046.0,640.0M1100.0,588.8L1048.8,640.0M1100.0,591.6L1051.6,640.0M1100.0,594.4L1054.4,640.0M1100.0,597.2L1057.2,640.0M1100.0,600.0L1060.0,640.0M1100.0,602.8L1062.8,640.0M1100.0,605.6L1065.6,640.0M1100.0,608.4L1068.4,640.0M1100.0,611.2L1071.2,640.0M1100.0,614.0L1074.0,640.0M1100.0,616.8L1076.8,640.0M1100.0,619.6L1079.6,640.0M1100.0,622.4L1082.4,640.0M1100.0,625.2L1085.2,640.0M1100.0,628.0L1088.0,640.0M1100.0,630.8L1090.8,640.0M1100.0,633.6L1093.6,640.0M1100.0,636.4L1096.4,640.0M1100.0,639.2L1099.2,640.0" stroke="#222" stroke-width="0.6" fill="none"/>
</defs>
<g id="hdr">
<path d="M731,132.3 L1326,133.2 L1326,136.2 L731,135.1 Z" fill="#000"/>
<text x="1325.5" y="130.6" font-size="13.2" text-anchor="end" fill="#111">5-3</text>
<text id="ttl" x="737.4" y="159.8" font-size="11.8" font-weight="bold" fill="#1a1a1a" letter-spacing="0.08" word-spacing="2.7">Hydrostatic Steering Valve</text>
<path d="M731,950 L733.5,172.2 L1328,172.5 L1325.6,950 M733.7,950 L736.6,172.8 M1325.5,172.8 L1322.9,950" fill="none" stroke="#000" stroke-width="1.1"/>
<path d="M1328.3,469.4 L1377.7,470 L1377.7,505.8 L1328.3,505.4 Z" fill="#000"/>
<text x="1353.2" y="498" font-size="26.5" font-weight="bold" text-anchor="middle" fill="#fff">5</text>
</g>
<g id="legend" font-size="9.5" fill="#111">
<text x="1153.6" y="307.9">1.</text><text x="1173.8" y="307.9" letter-spacing="0.14">Neutral position spring</text>
<text x="1153.2" y="319.6">2.</text><text x="1173.6" y="319.6">Housing</text>
<text x="1153.2" y="332.6">3.</text><text x="1173.6" y="332.6">Check valve</text>
<text x="1152.6" y="343.6">4.</text><text x="1173.2" y="343.6">Spool</text>
<text x="1152.6" y="354.7">5.</text><text x="1172.8" y="354.7">Sleeve</text>
<text x="1152.2" y="366.7">6.</text><text x="1171.8" y="366.7">Cardan shaft</text>
<text x="1152.2" y="378.6">7.</text><text x="1172.4" y="378.6">Gear rim</text>
<text x="1152" y="389.6">8.</text><text x="1172.8" y="389.6">Gear wheel (rotor)</text>
</g>
<!--D1--><g id="d1" transform="rotate(0.62 965 328)">
<clipPath id="a1"><path d="M857,231.3 L998,231.3 Q1004,229.5 1009,224.8 L1025,224.8 L1029.5,230 L1029.5,250 L980.5,250 L980.5,270 L870.3,270 L870.3,281 L858.5,281 L851.6,281 L851.9,265.4 L857.2,264.6 Z"/></clipPath><path d="M857,231.3 L998,231.3 Q1004,229.5 1009,224.8 L1025,224.8 L1029.5,230 L1029.5,250 L980.5,250 L980.5,270 L870.3,270 L870.3,281 L858.5,281 L851.6,281 L851.9,265.4 L857.2,264.6 Z" fill="#fff" stroke="none"/><use href="#HA" clip-path="url(#a1)"/><path d="M857,231.3 L998,231.3 Q1004,229.5 1009,224.8 L1025,224.8 L1029.5,230 L1029.5,250 L980.5,250 L980.5,270 L870.3,270 L870.3,281 L858.5,281 L851.6,281 L851.9,265.4 L857.2,264.6 Z" fill="none" stroke="#111" stroke-width="0.8"/>
<clipPath id="a2"><path d="M850.4,331 L870,331 L870,340.6 L980,340.6 L1000,340.6 L1000,349 L1028.2,349 L1028.2,392 L1022,397 L1020.6,410 Q1019,424 1013,427 L876.4,426 L876.4,379.6 L854.4,378 L855,344.4 L850,343.8 Z"/></clipPath><path d="M850.4,331 L870,331 L870,340.6 L980,340.6 L1000,340.6 L1000,349 L1028.2,349 L1028.2,392 L1022,397 L1020.6,410 Q1019,424 1013,427 L876.4,426 L876.4,379.6 L854.4,378 L855,344.4 L850,343.8 Z" fill="#fff" stroke="none"/><use href="#HA" clip-path="url(#a2)"/><path d="M850.4,331 L870,331 L870,340.6 L980,340.6 L1000,340.6 L1000,349 L1028.2,349 L1028.2,392 L1022,397 L1020.6,410 Q1019,424 1013,427 L876.4,426 L876.4,379.6 L854.4,378 L855,344.4 L850,343.8 Z" fill="none" stroke="#111" stroke-width="0.8"/>
<clipPath id="a3"><path d="M1029.5,230 L1036,230 L1036,247 L1029.5,247 Z"/></clipPath><path d="M1029.5,230 L1036,230 L1036,247 L1029.5,247 Z" fill="#fff" stroke="none"/><use href="#HB" clip-path="url(#a3)"/><path d="M1029.5,230 L1036,230 L1036,247 L1029.5,247 Z" fill="none" stroke="#111" stroke-width="0.9"/>
<clipPath id="a4"><path d="M1036,230 L1059.4,230 L1059.4,244.4 L1036,244.4 Z"/></clipPath><path d="M1036,230 L1059.4,230 L1059.4,244.4 L1036,244.4 Z" fill="#fff" stroke="none"/><use href="#HA" clip-path="url(#a4)"/><path d="M1036,230 L1059.4,230 L1059.4,244.4 L1036,244.4 Z" fill="none" stroke="#111" stroke-width="0.9"/>
<clipPath id="a5"><path d="M1059.4,230 L1067.6,230 Q1070.6,231 1070.6,236 L1070.6,268 L1085.6,271.6 L1086.4,340 L1070.6,346 L1059.4,352 L1059.4,230 Z"/></clipPath><path d="M1059.4,230 L1067.6,230 Q1070.6,231 1070.6,236 L1070.6,268 L1085.6,271.6 L1086.4,340 L1070.6,346 L1059.4,352 L1059.4,230 Z" fill="#fff" stroke="none"/><use href="#HB" clip-path="url(#a5)"/><path d="M1059.4,230 L1067.6,230 Q1070.6,231 1070.6,236 L1070.6,268 L1085.6,271.6 L1086.4,340 L1070.6,346 L1059.4,352 L1059.4,230 Z" fill="none" stroke="#111" stroke-width="0.8"/>
<path d="M1029.5,247 L1036,247 L1036,352 L1029.5,352 Z" fill="none" stroke="#111" stroke-width="0.9" />
<clipPath id="a6"><path d="M1037,260.6 L1059.4,260.6 L1059.4,283 L1037,283 Z"/></clipPath><path d="M1037,260.6 L1059.4,260.6 L1059.4,283 L1037,283 Z" fill="#fff" stroke="none"/><use href="#HB" clip-path="url(#a6)"/><path d="M1037,260.6 L1059.4,260.6 L1059.4,283 L1037,283 Z" fill="none" stroke="#111" stroke-width="0.9"/>
<clipPath id="a7"><path d="M1037,327 L1059.4,327 L1059.4,340 L1037,340 Z"/></clipPath><path d="M1037,327 L1059.4,327 L1059.4,340 L1037,340 Z" fill="#fff" stroke="none"/><use href="#HB" clip-path="url(#a7)"/><path d="M1037,327 L1059.4,327 L1059.4,340 L1037,340 Z" fill="none" stroke="#111" stroke-width="0.9"/>
<clipPath id="a8"><path d="M1031,340 L1059.4,340 L1059.4,352 L1031,352 Z"/></clipPath><path d="M1031,340 L1059.4,340 L1059.4,352 L1031,352 Z" fill="#fff" stroke="none"/><use href="#HA" clip-path="url(#a8)"/><path d="M1031,340 L1059.4,340 L1059.4,352 L1031,352 Z" fill="none" stroke="#111" stroke-width="0.9"/>
<clipPath id="a9"><rect x="1047.6" y="286.6" width="11.8" height="11.8" rx="0"/></clipPath><rect x="1047.6" y="286.6" width="11.8" height="11.8" rx="0" fill="#fff" stroke="none"/><use href="#HC" clip-path="url(#a9)"/><rect x="1047.6" y="286.6" width="11.8" height="11.8" rx="0" fill="none" stroke="#111" stroke-width="0.9"/>
<clipPath id="a10"><rect x="1047.6" y="311.6" width="11.8" height="12.0" rx="0"/></clipPath><rect x="1047.6" y="311.6" width="11.8" height="12.0" rx="0" fill="#fff" stroke="none"/><use href="#HC" clip-path="url(#a10)"/><rect x="1047.6" y="311.6" width="11.8" height="12.0" rx="0" fill="none" stroke="#111" stroke-width="0.9"/>
<path d="M1037.4,283 V327 M1045.4,283 V327" fill="none" stroke="#111" stroke-width="0.9" />
<circle cx="1041.4" cy="287.6" r="2.5" fill="#fff" stroke="#111" stroke-width="0.7"/>
<circle cx="1041.4" cy="294.4" r="2.5" fill="#fff" stroke="#111" stroke-width="0.7"/>
<circle cx="1041.4" cy="301.2" r="2.5" fill="#fff" stroke="#111" stroke-width="0.7"/>
<circle cx="1041.4" cy="308" r="2.5" fill="#fff" stroke="#111" stroke-width="0.7"/>
<circle cx="1041.4" cy="314.8" r="2.5" fill="#fff" stroke="#111" stroke-width="0.7"/>
<circle cx="1041.4" cy="321.6" r="2.5" fill="#fff" stroke="#111" stroke-width="0.7"/>
<rect x="1026.6" y="233.4" width="2.6" height="5.6" fill="#000"/>
<rect x="1037.6" y="233.4" width="2.6" height="5.6" fill="#000"/>
<rect x="1057" y="233.4" width="2.6" height="5.6" fill="#000"/>
<clipPath id="a11"><path d="M1024,373.4 L1068,373.4 L1068,380 L1063,385 L1024,385 Z"/></clipPath><path d="M1024,373.4 L1068,373.4 L1068,380 L1063,385 L1024,385 Z" fill="#fff" stroke="none"/><use href="#HA" clip-path="url(#a11)"/><path d="M1024,373.4 L1068,373.4 L1068,380 L1063,385 L1024,385 Z" fill="none" stroke="#111" stroke-width="0.9"/>
<rect x="1025.6" y="375.6" width="2.4" height="5.4" fill="#000"/>
<rect x="1036" y="375.6" width="2.4" height="5.4" fill="#000"/>
<rect x="1056.4" y="375.6" width="2.4" height="5.4" fill="#000"/>
<path d="M1034,373.4 V385" fill="none" stroke="#111" stroke-width="0.9" />
<path d="M1073.6,238.6 L1075.6,236.6 L1083.6,236.6 L1085.4,238.6 L1085.4,266 L1083.6,268 L1075.6,268 L1073.6,266 Z M1073.6,247 H1085.4 M1073.6,258 H1085.4" fill="#fff" stroke="#111" stroke-width="0.9" />
<path d="M1071.2,238 V268" fill="none" stroke="#111" stroke-width="0.9" />
<path d="M1074.6,352 L1083.4,352 L1085.2,354 L1085.2,376 L1083.4,378 L1074.6,378 L1073,376 L1073,354 Z M1073,360.6 H1085.2 M1073,369.6 H1085.2" fill="#fff" stroke="#111" stroke-width="0.9" />
<path d="M1070.6,354 V376" fill="none" stroke="#111" stroke-width="0.9" />
<path d="M1017,357.6 H1073 M1017,371.4 H1073 M1048,357.6 V371.4 M1017,357.6 V371.4" fill="none" stroke="#111" stroke-width="0.9" />
<path d="M980.5,250 H1029.5 V270 H980.5 Z" fill="#fff" stroke="#111" stroke-width="0.9" />
<clipPath id="a12"><rect x="990" y="263.6" width="39.5" height="6.4" rx="0"/></clipPath><rect x="990" y="263.6" width="39.5" height="6.4" rx="0" fill="#fff" stroke="none"/><use href="#HB" clip-path="url(#a12)"/><rect x="990" y="263.6" width="39.5" height="6.4" rx="0" fill="none" stroke="#111" stroke-width="0.9"/>
<rect x="882.2" y="265" width="18.0" height="5" rx="0" fill="#fff" stroke="#111" stroke-width="0.9"/>
<rect x="922.6" y="267.4" width="17.0" height="2.6" rx="0" fill="#fff" stroke="#111" stroke-width="0.9"/>
<rect x="955.4" y="267.8" width="16.4" height="2.2" rx="0" fill="#fff" stroke="#111" stroke-width="0.9"/>
<clipPath id="a13"><rect x="881.2" y="270" width="148.3" height="7.4" rx="0"/></clipPath><rect x="881.2" y="270" width="148.3" height="7.4" rx="0" fill="#fff" stroke="none"/><use href="#HB" clip-path="url(#a13)"/><rect x="881.2" y="270" width="148.3" height="7.4" rx="0" fill="none" stroke="#111" stroke-width="0.9"/>
<rect x="891.6" y="270" width="7.0" height="7.4" rx="0" fill="#fff" stroke="#111" stroke-width="0.9"/>
<rect x="870.3" y="268.6" width="10.9" height="12.4" rx="0" fill="#fff" stroke="#111" stroke-width="0.9"/>
<path d="M872.4,270 V281 M879.2,270 V281 M870.3,272 H881.2" fill="none" stroke="#111" stroke-width="0.9" />
<circle cx="875.8" cy="275.4" r="2.2" fill="#fff" stroke="#111" stroke-width="0.7"/>
<clipPath id="a14"><rect x="880" y="332.6" width="149.5" height="8.0" rx="0"/></clipPath><rect x="880" y="332.6" width="149.5" height="8.0" rx="0" fill="#fff" stroke="none"/><use href="#HB" clip-path="url(#a14)"/><rect x="880" y="332.6" width="149.5" height="8.0" rx="0" fill="none" stroke="#111" stroke-width="0.9"/>
<rect x="889.6" y="332.6" width="7.8" height="8.0" rx="0" fill="#fff" stroke="#111" stroke-width="0.9"/>
<rect x="869" y="326" width="11" height="14.6" rx="0" fill="#fff" stroke="#111" stroke-width="0.9"/>
<path d="M871.4,326 V340.6 M877.6,326 V340.6 M869,338 H880" fill="none" stroke="#111" stroke-width="0.9" />
<path d="M880.4,340.6 V345.4 Q880.4,348 883,348 H896.4 Q899,348 899,345.4 V340.6" fill="#fff" stroke="#111" stroke-width="0.9" />
<rect x="921" y="340.6" width="16" height="2.6" rx="0" fill="#fff" stroke="#111" stroke-width="0.9"/>
<rect x="953" y="340.6" width="15" height="2.8" rx="0" fill="#fff" stroke="#111" stroke-width="0.9"/>
<clipPath id="a15"><path d="M881.2,277.4 H1017 V287.4 H912 Q906,284.4 898,287 L881.2,287 Z"/></clipPath><path d="M881.2,277.4 H1017 V287.4 H912 Q906,284.4 898,287 L881.2,287 Z" fill="#fff" stroke="none"/><use href="#HA" clip-path="url(#a15)"/><path d="M881.2,277.4 H1017 V287.4 H912 Q906,284.4 898,287 L881.2,287 Z" fill="none" stroke="#111" stroke-width="0.9"/>
<path d="M922,278.4 H968 Q972,280.6 968,282.8 H922 Z" fill="#fff" stroke="#111" stroke-width="0.9" />
<clipPath id="a16"><path d="M881.2,322.6 H898 Q906,326 912,322.6 H1017 V332.6 H881.2 Z"/></clipPath><path d="M881.2,322.6 H898 Q906,326 912,322.6 H1017 V332.6 H881.2 Z" fill="#fff" stroke="none"/><use href="#HA" clip-path="url(#a16)"/><path d="M881.2,322.6 H898 Q906,326 912,322.6 H1017 V332.6 H881.2 Z" fill="none" stroke="#111" stroke-width="0.9"/>
<path d="M922,327.2 H968 Q972,329.4 968,331.6 H922 Z" fill="#fff" stroke="#111" stroke-width="0.9" />
<rect x="1001" y="268" width="18.6" height="13" rx="0" fill="#fff" stroke="#111" stroke-width="0.9"/>
<path d="M1011,270 V281 M1013.4,270 V281 M1015.8,270 V281 M1018,270 V281" fill="none" stroke="#111" stroke-width="0.9" />
<clipPath id="a17"><rect x="1019.6" y="267" width="9.9" height="16" rx="0"/></clipPath><rect x="1019.6" y="267" width="9.9" height="16" rx="0" fill="#fff" stroke="none"/><use href="#HB" clip-path="url(#a17)"/><rect x="1019.6" y="267" width="9.9" height="16" rx="0" fill="none" stroke="#111" stroke-width="0.9"/>
<rect x="998" y="318" width="18" height="13" rx="0" fill="#fff" stroke="#111" stroke-width="0.9"/>
<path d="M1010,320 V331 M1012.4,320 V331" fill="none" stroke="#111" stroke-width="0.9" />
<clipPath id="a18"><rect x="1016" y="318" width="13.5" height="22.6" rx="0"/></clipPath><rect x="1016" y="318" width="13.5" height="22.6" rx="0" fill="#fff" stroke="none"/><use href="#HB" clip-path="url(#a18)"/><rect x="1016" y="318" width="13.5" height="22.6" rx="0" fill="none" stroke="#111" stroke-width="0.9"/>
<clipPath id="a19"><path d="M844,282.4 H881 V288.4 H849 V319.6 H881 V325.4 H844 Z"/></clipPath><path d="M844,282.4 H881 V288.4 H849 V319.6 H881 V325.4 H844 Z" fill="#fff" stroke="none"/><use href="#HA" clip-path="url(#a19)"/><path d="M844,282.4 H881 V288.4 H849 V319.6 H881 V325.4 H844 Z" fill="none" stroke="#111" stroke-width="0.8"/>
<rect x="848.6" y="289" width="27.0" height="29.6" rx="0" fill="#fff" stroke="#111" stroke-width="0.9"/>
<path d="M850,290.2 H875" stroke="#111" stroke-width="1.1"/>
<path d="M850,292.3 H875" stroke="#111" stroke-width="0.6"/>
<path d="M850,294.4 H875" stroke="#111" stroke-width="1.1"/>
<path d="M850,296.5 H875" stroke="#111" stroke-width="0.6"/>
<path d="M850,298.6 H875" stroke="#111" stroke-width="1.1"/>
<path d="M850,300.7 H875" stroke="#111" stroke-width="0.6"/>
<path d="M850,302.8 H875" stroke="#111" stroke-width="1.1"/>
<path d="M850,304.9 H875" stroke="#111" stroke-width="0.6"/>
<path d="M850,307.0 H875" stroke="#111" stroke-width="1.1"/>
<path d="M850,309.1 H875" stroke="#111" stroke-width="0.6"/>
<path d="M850,311.2 H875" stroke="#111" stroke-width="1.1"/>
<path d="M850,313.3 H875" stroke="#111" stroke-width="0.6"/>
<path d="M850,315.4 H875" stroke="#111" stroke-width="1.1"/>
<path d="M850,317.5 H875" stroke="#111" stroke-width="0.6"/>
<path d="M846.6,283 V325" fill="none" stroke="#111" stroke-width="0.9" />
<rect x="851.6" y="275.6" width="6.4" height="5" fill="#000"/><rect x="865.2" y="278.8" width="3.8" height="2.4" fill="#000"/>
<rect x="851.2" y="326" width="6.6" height="5.8" fill="#000"/><rect x="865" y="326" width="3.8" height="2.6" fill="#000"/>
<rect x="878.6" y="287.4" width="32.0" height="34.0" rx="0" fill="#fff" stroke="#111" stroke-width="0.9"/>
<path d="M888.6,287.4 V296 M892.2,287.4 V296 M888.6,310 V321.4 M892.2,310 V321.4" fill="none" stroke="#111" stroke-width="0.9" />
<rect x="878.6" y="298" width="20.4" height="11" rx="0" fill="#555" stroke="#111" stroke-width="0.6"/>
<path d="M899,298 H902 Q905,303.4 902,309 H899 Z" fill="#fff" stroke="#111" stroke-width="0.9" />
<path d="M879,300 H899" stroke="#000" stroke-width="0.6"/>
<path d="M879,302 H899" stroke="#000" stroke-width="0.6"/>
<path d="M879,304 H899" stroke="#000" stroke-width="0.6"/>
<path d="M879,306 H899" stroke="#000" stroke-width="0.6"/>
<path d="M879,308 H899" stroke="#000" stroke-width="0.6"/>
<rect x="911" y="270.4" width="8.4" height="69.2" rx="0" fill="#fff" stroke="#111" stroke-width="0.9"/>
<path d="M913,270.4 V290 M917.4,270.4 V290 M913,321 V339.6 M917.4,321 V339.6" fill="none" stroke="#111" stroke-width="0.9" />
<path d="M910.8,290 V320 M910.8,297 Q911.6,291 918,290.2 Q930,289.6 942,293.2 L1037,293.2 V318.6 L942,318.6 Q930,322.4 918,321.6 Q911.6,321 910.8,315 Z" fill="#fff" stroke="#111" stroke-width="0.8" />
<path d="M914,299 Q915,293.6 921,293.6 Q934,294 941,299.6 Q944,303 944,305.8 Q944,309 941,312 Q934,317.6 921,318 Q915,318 914,312.6 Z" fill="#fff" stroke="#111" stroke-width="0.9" />
<path d="M951.4,293.2 V318.6" fill="none" stroke="#111" stroke-width="0.9" />
<path d="M920,287.4 H1029 M920,324.4 H1029 M1017,277.4 V332.6" fill="none" stroke="#111" stroke-width="0.9" />
<path d="M906,357 Q907,353 912,353 L935,352.6 L1000,352.6 V349 H1029 V372 H1000 L940,373.6 L918,373.6 V387 H905 V361 Z" fill="#fff" stroke="#111" stroke-width="0.9" />
<path d="M906,357 Q909,360 913,359.4" fill="none" stroke="#111" stroke-width="0.9" />
<circle cx="930" cy="362.8" r="7.6" fill="#fff" stroke="#111" stroke-width="0.8"/>
<path d="M958,363.4 H1000 M958,365.2 H1000 M958,363.4 V365.2" fill="none" stroke="#111" stroke-width="0.9" />
<path d="M938,362.4 H958" fill="none" stroke="#111" stroke-width="0.9" />
<clipPath id="a20"><path d="M1003.4,356.4 H1024.4 V374.2 H1003.4 Q1000.6,365.4 1003.4,356.4 Z"/></clipPath><path d="M1003.4,356.4 H1024.4 V374.2 H1003.4 Q1000.6,365.4 1003.4,356.4 Z" fill="#fff" stroke="none"/><use href="#HC" clip-path="url(#a20)"/><path d="M1003.4,356.4 H1024.4 V374.2 H1003.4 Q1000.6,365.4 1003.4,356.4 Z" fill="none" stroke="#111" stroke-width="0.9"/>
<path d="M1005.4,360.6 H1046 V369.6 H1005.4 Z" fill="#fff" stroke="#111" stroke-width="0.9" />
<path d="M1009,358.4 V360.6 M1009,369.6 V372" fill="none" stroke="#111" stroke-width="0.7" />
<path d="M985,340.6 Q988,352 1002,353 Q1010,352 1013,343 V340.6 Z" fill="#fff" stroke="#111" stroke-width="0.9" />
<path d="M892.2,389.6 L905.6,381.6 L919.6,389.6 V420.6 H892.2 Z" fill="#fff" stroke="#111" stroke-width="0.9" />
<path d="M889.6,398.6 L892.2,392 M922.4,398.6 L919.6,392 M889.6,398.6 V420.6 L892.2,424 M922.4,398.6 V420.6 L919.6,424 M889.6,398.6 H922.4 M892.2,420.6 H919.6 M892.2,389.6 H919.6" fill="none" stroke="#111" stroke-width="0.9" />
<path d="M971.6,381.6 Q976,374.6 984,372.6 Q992,374.6 999,381.6 V421.6 H971.6 Z" fill="#fff" stroke="#111" stroke-width="0.9" />
<path d="M968.4,392.6 V421.6 L971.6,425 M1001.4,392.6 V421.6 L999,425 M968.4,392.6 H1001.4 M971.6,381.6 H999" fill="none" stroke="#111" stroke-width="0.9" />
<path d="M972.6,391.4 H996.6 V395 H972.6 Z M970.4,395 H999.4 V401.6 H970.4 Z M975,395 V401.6 M994,395 V401.6" fill="none" stroke="#111" stroke-width="0.9" />
<path d="M982,396.4 H986.6 V416.4 H982 Z M979.4,416.4 H989.4 V420.4 H979.4 Z M979.4,418.4 H989.4" fill="#fff" stroke="#111" stroke-width="0.9" />
<path d="M1015.6,397 H1021.6 V410 H1015.6 Z" fill="#fff" stroke="#111" stroke-width="0.9" />
<rect x="870.6" y="379.6" width="5.8" height="20.4" rx="0" fill="#fff" stroke="#111" stroke-width="0.9"/>
<path d="M837,305 H1094" stroke="#111" stroke-width="0.5" stroke-dasharray="14 2 2 2" fill="none"/><path d="M905.6,378 V432" stroke="#111" stroke-width="0.5" stroke-dasharray="14 2 2 2" fill="none"/><path d="M984,368 V432" stroke="#111" stroke-width="0.5" stroke-dasharray="14 2 2 2" fill="none"/><path d="M1044,365 H1090" stroke="#111" stroke-width="0.5" stroke-dasharray="14 2 2 2" fill="none"/>
</g>
<g id="d1l" stroke="#111" stroke-width="0.6" fill="none"><path d="M855.6,199.4 L885.6,299 M898.6,199.8 L902,237.6 M933,199.8 L936.4,287 M959.6,200.6 L951.4,273 M992.6,200.6 L981.6,297.8 M1050,202 L1047.2,230.6 M1080,203 L1051.4,267.6 M850,403 L928,366"/></g>
<g font-size="9" fill="#2a2a2a" text-anchor="middle"><text x="854" y="198.4">1</text><text x="898.6" y="199">2</text><text x="933" y="199.2">4</text><text x="959.8" y="199.2">5</text><text x="993" y="199.4">6</text><text x="1050.2" y="201">7</text><text x="1083" y="202">8</text><text x="846.2" y="408">3</text></g>
<!--/D1-->
<!--D2--><defs><path id="HA2" d="M840.0,590.2L845.8,596.0M840.0,584.4L851.6,596.0M840.0,578.6L857.4,596.0M840.0,572.8L863.2,596.0M840.0,567.0L869.0,596.0M840.0,561.2L874.8,596.0M840.0,555.4L880.6,596.0M840.0,549.6L886.4,596.0M840.0,543.8L892.2,596.0M840.0,538.0L898.0,596.0M840.0,532.2L903.8,596.0M840.0,526.4L909.6,596.0M840.0,520.6L915.4,596.0M840.0,514.8L921.2,596.0M840.0,509.0L927.0,596.0M844.8,508.0L932.8,596.0M850.6,508.0L938.6,596.0M856.4,508.0L944.4,596.0M862.2,508.0L950.2,596.0M868.0,508.0L956.0,596.0M873.8,508.0L961.8,596.0M879.6,508.0L967.6,596.0M885.4,508.0L973.4,596.0M891.2,508.0L979.2,596.0M897.0,508.0L985.0,596.0M902.8,508.0L990.8,596.0M908.6,508.0L996.6,596.0M914.4,508.0L1002.4,596.0M920.2,508.0L1008.2,596.0M926.0,508.0L1014.0,596.0M931.8,508.0L1019.8,596.0M937.6,508.0L1025.6,596.0M943.4,508.0L1031.4,596.0M949.2,508.0L1035.0,593.8M955.0,508.0L1035.0,588.0M960.8,508.0L1035.0,582.2M966.6,508.0L1035.0,576.4M972.4,508.0L1035.0,570.6M978.2,508.0L1035.0,564.8M984.0,508.0L1035.0,559.0M989.8,508.0L1035.0,553.2M995.6,508.0L1035.0,547.4M1001.4,508.0L1035.0,541.6M1007.2,508.0L1035.0,535.8M1013.0,508.0L1035.0,530.0M1018.8,508.0L1035.0,524.2M1024.6,508.0L1035.0,518.4M1030.4,508.0L1035.0,512.6" stroke="#222" stroke-width="0.75" fill="none"/></defs><g id="d2" transform="rotate(0.9 960 520)">
<clipPath id="b1"><path d="M846.6,515.4 L866.4,515.4 L866.4,526 L1027,526 L1027,557.6 L1022.4,563.8 L1016.4,573.6 L1012,589.6 L872.4,588 L872.4,579.4 L876.8,579.4 L876.8,546 L873.4,542.8 L852,542 L852,523.4 L846.6,522.4 Z"/></clipPath><path d="M846.6,515.4 L866.4,515.4 L866.4,526 L1027,526 L1027,557.6 L1022.4,563.8 L1016.4,573.6 L1012,589.6 L872.4,588 L872.4,579.4 L876.8,579.4 L876.8,546 L873.4,542.8 L852,542 L852,523.4 L846.6,522.4 Z" fill="#fff" stroke="none"/><use href="#HA2" clip-path="url(#b1)"/><path d="M846.6,515.4 L866.4,515.4 L866.4,526 L1027,526 L1027,557.6 L1022.4,563.8 L1016.4,573.6 L1012,589.6 L872.4,588 L872.4,579.4 L876.8,579.4 L876.8,546 L873.4,542.8 L852,542 L852,523.4 L846.6,522.4 Z" fill="none" stroke="#111" stroke-width="0.9"/>
<path d="M876.8,546 L925,550.6 H1002 L1009,565.4 L1002,579.2 H876.8 Z" fill="#fff" stroke="#111" stroke-width="0.9" />
<path d="M976.6,551 L1001.6,531.6 L1008.8,531.6 L1008.8,534 L984.6,552.6 Z" fill="#fff" stroke="#111" stroke-width="0.9" />
<rect x="919" y="526" width="18" height="4.6" rx="0" fill="#fff" stroke="#111" stroke-width="0.9"/>
<rect x="952.6" y="526" width="15.4" height="4.4" rx="0" fill="#fff" stroke="#111" stroke-width="0.9"/>
<rect x="994.6" y="526" width="19.0" height="4.2" rx="0" fill="#fff" stroke="#111" stroke-width="0.9"/>
<rect x="1022.6" y="557.4" width="3.6" height="6" fill="#000"/>
<rect x="847.4" y="509" width="6.2" height="6.4" fill="#000"/><rect x="861.6" y="508.6" width="3.8" height="2" fill="#000"/>
<rect x="866.4" y="509" width="8.8" height="15.4" rx="0" fill="#fff" stroke="#111" stroke-width="0.9"/>
<path d="M868.6,509 V524.4 M872.8,509 V524.4 M866.4,513 H875.2" fill="none" stroke="#111" stroke-width="0.9" />
<path d="M850,542.4 H867 V555.6 H850 Z" fill="#fff" stroke="#111" stroke-width="0.9" />
<rect x="867" y="544" width="9.8" height="38.4" rx="0" fill="#fff" stroke="#111" stroke-width="0.9"/>
<path d="M870,544 V582.4 M873.4,547 V579" fill="none" stroke="#111" stroke-width="0.9" />
<path d="M880.6,547.6 V578.8 M886,547.6 V578.8 M888,547.6 V578.8" fill="none" stroke="#111" stroke-width="0.9" />
<clipPath id="b2"><path d="M891,549 H899.4 V578 H891 V567 L893.8,563.6 L891,560 Z"/></clipPath><path d="M891,549 H899.4 V578 H891 V567 L893.8,563.6 L891,560 Z" fill="#fff" stroke="none"/><use href="#HD" clip-path="url(#b2)"/><path d="M891,549 H899.4 V578 H891 V567 L893.8,563.6 L891,560 Z" fill="none" stroke="#111" stroke-width="0.9"/>
<path d="M899.6,553 H908 M899.6,575.6 H908 M900.6,574 L903.6,554 M903.0,575 L906.6,554.6 M904.6,553 V575.6" fill="none" stroke="#111" stroke-width="0.9" />
<path d="M933,553.6 H948 M931,575.6 H946 M933,574.6 L938.6,554.6 M937,575 L942.6,554.6 M941,575 L946.4,554.6" fill="none" stroke="#111" stroke-width="0.9" />
<rect x="904.6" y="552.1999999999999" width="2.2" height="2.4" fill="#000"/>
<rect x="900" y="573.4" width="2.2" height="2.4" fill="#000"/>
<rect x="937" y="552.4" width="2.2" height="2.4" fill="#000"/>
<rect x="941" y="552.4" width="2.2" height="2.4" fill="#000"/>
<rect x="945" y="552.4" width="2.2" height="2.4" fill="#000"/>
<rect x="932.6" y="573.4" width="2.2" height="2.4" fill="#000"/>
<rect x="936.6" y="573.4" width="2.2" height="2.4" fill="#000"/>
<rect x="940.6" y="573.4" width="2.2" height="2.4" fill="#000"/>
<path d="M909,552.6 H932 M909,554.6 H932 M909,574 H931 M909,576 H931 M921,556 V573" fill="none" stroke="#111" stroke-width="0.6" stroke-dasharray="5 2"/>
<path d="M899.4,549.6 V578 M953,549 V578.6 M957,549 V578.6" fill="none" stroke="#111" stroke-width="0.9" />
<clipPath id="b3"><path d="M973.4,553.8 H1000 V561.8 H973.4 Z"/></clipPath><path d="M973.4,553.8 H1000 V561.8 H973.4 Z" fill="#fff" stroke="none"/><use href="#HC" clip-path="url(#b3)"/><path d="M973.4,553.8 H1000 V561.8 H973.4 Z" fill="none" stroke="#111" stroke-width="0.9"/>
<clipPath id="b4"><path d="M961,549 H975 L972,553 H961 Z"/></clipPath><path d="M961,549 H975 L972,553 H961 Z" fill="#fff" stroke="none"/><use href="#HC" clip-path="url(#b4)"/><path d="M961,549 H975 L972,553 H961 Z" fill="none" stroke="#111" stroke-width="0.9"/>
<path d="M957,562 H1000 V565.4 H957 Z M975,567.6 H1000 V575.6 H975 Z M984,567.6 V575.6 M989,567.6 V575.6 M960,568 Q967,566 974,568 M960,572 Q967,570 974,572 M960,576 Q967,574 974,576" fill="none" stroke="#111" stroke-width="0.9" />
<path d="M957,565.4 V578.6 M1000,553.8 V578.8" fill="none" stroke="#111" stroke-width="0.9" />
<rect x="876" y="486.8" width="23.4" height="42.0" rx="0" fill="#fff" stroke="#111" stroke-width="0.9"/>
<path d="M885,486.8 V528.8" fill="none" stroke="#111" stroke-width="0.9" />
<circle cx="891.6" cy="502.8" r="4.4" fill="#fff" stroke="#111" stroke-width="0.9"/>
<path d="M848.4,466 Q838.4,465 838.4,470 V507.4 H876 M841.4,467 V507.4 M844.4,466.4 V507.4" fill="none" stroke="#111" stroke-width="0.9" />
<path d="M848.4,456.4 V507.4 M853.4,456.4 V486.8 M848.4,486.8 H1035" fill="none" stroke="#111" stroke-width="0.9" />
<path d="M899.4,489.6 Q915,490 935,496.6 Q960,503.6 1028.6,498" fill="none" stroke="#111" stroke-width="0.9" />
<path d="M941.4,458 Q936,466 936,477 Q936,488 940,491.6 Q944,494.4 958,494.4 Q972,494.4 976,491.6 Q979.6,488 979.6,477 Q979.6,466 975,458" fill="none" stroke="#111" stroke-width="0.9" />
<path d="M937,482 Q958,489 979,482" fill="none" stroke="#111" stroke-width="0.7" />
<path d="M995.6,458 V488.6 M1007.4,458 V488.6 M1021.6,458 V488.6 M1028.6,458 V527 M1035,458 V564.6 M1057.4,458 V564.6 M1063.6,458 V560 M1027,564.6 H1063 L1067,560" fill="none" stroke="#111" stroke-width="0.9" />
<path d="M978.6,488.6 H1067" fill="none" stroke="#111" stroke-width="0.7" />
<path d="M1067.2,462 L1069,459.8 H1081 L1082.6,462 V488 L1081,490.4 H1069 L1067.2,488 Z M1067.2,470 H1082.6 M1067.2,481 H1082.6 M1065.4,459 V560" fill="#fff" stroke="#111" stroke-width="0.9" />
<path d="M1067.2,511 L1069,509 H1080.6 L1082.4,511 V558.6 L1080.6,561 H1069 L1067.2,558.6 Z M1067.2,524 H1082.4 M1067.2,535 H1082.4 M1067.2,547 H1082.4" fill="#fff" stroke="#111" stroke-width="0.9" />
<path d="M1075,490.4 V509 M1077.4,490.4 V509" fill="none" stroke="#111" stroke-width="0.6" />
<ellipse cx="957.4" cy="513.6" rx="3" ry="1.8" fill="#fff" stroke="#111" stroke-width="0.9"/><ellipse cx="981.4" cy="513.6" rx="4.4" ry="2.3" fill="#fff" stroke="#111" stroke-width="1.3"/><ellipse cx="981.4" cy="523.4" rx="4" ry="2" fill="#fff" stroke="#111" stroke-width="0.9"/><circle cx="998.4" cy="508.4" r="4.4" fill="#fff" stroke="#111" stroke-width="0.9"/>
<path d="M1007,509 V526 M1011.4,509 V526 M1004,513 H1015 M1004,522 H1015" fill="none" stroke="#111" stroke-width="0.6" stroke-dasharray="3 1.5"/>
<circle cx="1007" cy="513" r="1" fill="#000"/><circle cx="1007" cy="522" r="1" fill="#000"/><circle cx="1011.4" cy="513" r="1" fill="#000"/><circle cx="1011.4" cy="522" r="1" fill="#000"/>
<path d="M924,520.6 H940 M931.6,516 V526" fill="none" stroke="#111" stroke-width="0.7" />
<path d="M832,485.8 H850" stroke="#111" stroke-width="1"/><path d="M958.2,456 V522" stroke="#111" stroke-width="0.5" stroke-dasharray="12 2 2 2" fill="none"/><path d="M950,513.6 H990" stroke="#111" stroke-width="0.5" stroke-dasharray="12 2 2 2" fill="none"/><path d="M891.6,493 V514" stroke="#111" stroke-width="0.5" stroke-dasharray="12 2 2 2" fill="none"/><path d="M998.4,500 V518 M990,508.4 H1003" stroke="#111" stroke-width="0.5" stroke-dasharray="12 2 2 2" fill="none"/><path d="M860,563.8 H900 M1000,566.4 H1016" stroke="#111" stroke-width="0.5" stroke-dasharray="12 2 2 2" fill="none"/><path d="M1060,488.6 H1092" stroke="#111" stroke-width="0.5" stroke-dasharray="12 2 2 2" fill="none"/>
</g>
<path d="M957.2,575.4 L965.4,600.4" stroke="#111" stroke-width="0.6" fill="none"/>
<text x="942.2" y="611.2" font-size="9.15" fill="#111" word-spacing="0.8">Relief valve</text>
<!--/D2-->
<!--D3--><defs><path id="HB3" d="M792.6,812.0L790.0,814.6M795.2,812.0L790.0,817.2M797.8,812.0L790.0,819.8M800.4,812.0L790.0,822.4M803.0,812.0L790.0,825.0M805.6,812.0L790.0,827.6M808.2,812.0L790.0,830.2M810.8,812.0L790.0,832.8M813.4,812.0L791.4,834.0M816.0,812.0L794.0,834.0M818.6,812.0L796.6,834.0M821.2,812.0L799.2,834.0M823.8,812.0L801.8,834.0M826.4,812.0L804.4,834.0M829.0,812.0L807.0,834.0M831.6,812.0L809.6,834.0M832.0,814.2L812.2,834.0M832.0,816.8L814.8,834.0M832.0,819.4L817.4,834.0M832.0,822.0L820.0,834.0M832.0,824.6L822.6,834.0M832.0,827.2L825.2,834.0M832.0,829.8L827.8,834.0M832.0,832.4L830.4,834.0" stroke="#222" stroke-width="0.6" fill="none"/></defs><g id="d3" transform="rotate(0.8 925 800)">
<path d="M805.6,720.6 H907.6 V713 H956.4 V720.6 M805.6,720.6 V879.6 H962" fill="none" stroke="#111" stroke-width="0.9" />
<path d="M961.6,728 Q966,716.6 974,715.2 H992 M961.6,874 Q966,885.6 972,886.6 H1031 Q1039.6,886 1040.6,877 V729 Q1040,719.6 1031.6,718.6 H995.6" fill="none" stroke="#111" stroke-width="0.9" />
<path d="M989.6,715.2 L988.6,886.6 M992.4,715.2 V718.6 M995.6,718.6 L993.6,886.6 M1006.4,718.6 L1003.4,886.6 M1025.4,718.6 L1022.6,886.6" fill="none" stroke="#111" stroke-width="0.9" />
<rect x="831.4" y="727" width="146.4" height="148.6" rx="23" ry="23" fill="#fff" stroke="#111" stroke-width="0.9"/>
<path d="M977.8,785 L986,789 V818 L977.8,822" fill="none" stroke="#111" stroke-width="0.9" />
<circle cx="862.6" cy="757.6" r="22.4" fill="none" stroke="#111" stroke-width="0.9"/><circle cx="862.6" cy="757.6" r="18.4" fill="none" stroke="#111" stroke-width="1.1"/><circle cx="862.6" cy="757.6" r="16" fill="none" stroke="#111" stroke-width="0.8"/>
<circle cx="948.4" cy="759.4" r="22.4" fill="none" stroke="#111" stroke-width="0.9"/><circle cx="948.4" cy="759.4" r="18.4" fill="none" stroke="#111" stroke-width="1.1"/><circle cx="948.4" cy="759.4" r="16" fill="none" stroke="#111" stroke-width="0.8"/>
<circle cx="862.2" cy="844.2" r="22.4" fill="none" stroke="#111" stroke-width="0.9"/><circle cx="862.2" cy="844.2" r="18.4" fill="none" stroke="#111" stroke-width="1.1"/><circle cx="862.2" cy="844.2" r="16" fill="none" stroke="#111" stroke-width="0.8"/>
<circle cx="946.6" cy="844.8" r="22.4" fill="none" stroke="#111" stroke-width="0.9"/><circle cx="946.6" cy="844.8" r="18.4" fill="none" stroke="#111" stroke-width="1.1"/><circle cx="946.6" cy="844.8" r="16" fill="none" stroke="#111" stroke-width="0.8"/>
<circle cx="946.6" cy="844.8" r="11.4" fill="none" stroke="#111" stroke-width="0.9"/><circle cx="946.6" cy="844.8" r="4.6" fill="none" stroke="#111" stroke-width="1.1"/><circle cx="946.6" cy="844.8" r="8" fill="none" stroke="#111" stroke-width="0.7"/><path d="M944.6,840.8 L938.6,836.8 M951.0,845.4 L957.6,846.8 M944.6,849.0 L941.6,854.8" fill="none" stroke="#111" stroke-width="1" />
<circle cx="906" cy="743" r="13.6" fill="none" stroke="#111" stroke-width="0.9"/><circle cx="906" cy="743" r="10.4" fill="none" stroke="#111" stroke-width="0.8"/><circle cx="906" cy="743" r="8.1" fill="none" stroke="#111" stroke-width="1"/><circle cx="905.8" cy="766.8" r="6.3" fill="none" stroke="#111" stroke-width="0.9"/>
<circle cx="905" cy="858.8" r="13.4" fill="none" stroke="#111" stroke-width="0.9"/><circle cx="905" cy="858.8" r="10.2" fill="none" stroke="#111" stroke-width="0.8"/><circle cx="905" cy="858.8" r="8" fill="none" stroke="#111" stroke-width="1"/>
<path d="M801,758 H806 V839 H801 Z" fill="#fff" stroke="#111" stroke-width="0.9" />
<path d="M826,779 H831.4 V822 H826 Z" fill="#fff" stroke="#111" stroke-width="1.2" />
<path d="M806,776.6 H831 M806,824.6 H831" fill="none" stroke="#111" stroke-width="0.9" />
<path d="M793.6,776.8 H801 V792 H793.6 Z M796,776.8 V792" fill="#fff" stroke="#111" stroke-width="0.9" />
<path d="M792.4,791.6 H818 Q826,793 826.4,803 Q826.6,812 823,818 L820,824.4 H792.4 Z" fill="#fff" stroke="#111" stroke-width="1" />
<path d="M795,796 H822" fill="none" stroke="#111" stroke-width="1.1" />
<path d="M795,799.4 H822" fill="none" stroke="#111" stroke-width="0.8" />
<path d="M795,802.8 H822" fill="none" stroke="#111" stroke-width="1.1" />
<path d="M795,806.2 H822" fill="none" stroke="#111" stroke-width="0.8" />
<path d="M795,809.6 H822" fill="none" stroke="#111" stroke-width="1.1" />
<path d="M795,813 H822" fill="none" stroke="#111" stroke-width="0.8" />
<clipPath id="e1"><path d="M792.4,816 H820 L823,818 L820,824.4 H792.4 Z"/></clipPath><path d="M792.4,816 H820 L823,818 L820,824.4 H792.4 Z" fill="#fff" stroke="none"/><use href="#HB3" clip-path="url(#e1)"/><path d="M792.4,816 H820 L823,818 L820,824.4 H792.4 Z" fill="none" stroke="#111" stroke-width="0.9"/>
<path d="M818,797 Q823,804 821,814" fill="none" stroke="#111" stroke-width="0.7" />
<clipPath id="e2"><path d="M800,824.4 Q801,830 806,830 Q812,829 814,824.4 Z"/></clipPath><path d="M800,824.4 Q801,830 806,830 Q812,829 814,824.4 Z" fill="#fff" stroke="none"/><use href="#HB3" clip-path="url(#e2)"/><path d="M800,824.4 Q801,830 806,830 Q812,829 814,824.4 Z" fill="none" stroke="#111" stroke-width="0.9"/>
<path d="M794.6,793 V815" fill="none" stroke="#111" stroke-width="0.7" />
<path d="M1043.6,731 L1045.1999999999998,729 H1054.0 L1055.6,731 V766 L1054.0,768 H1045.1999999999998 L1043.6,766 Z" fill="#fff" stroke="#111" stroke-width="0.9" />
<path d="M1043.6,738 H1055.6" fill="none" stroke="#111" stroke-width="0.8" />
<path d="M1043.6,748 H1055.6" fill="none" stroke="#111" stroke-width="0.8" />
<path d="M1043.6,760 H1055.6" fill="none" stroke="#111" stroke-width="0.8" />
<path d="M1043.4,792.4 L1045.0,790.4 H1052.8000000000002 L1054.4,792.4 V816 L1052.8000000000002,818 H1045.0 L1043.4,816 Z" fill="#fff" stroke="#111" stroke-width="0.9" />
<path d="M1043.4,799 H1054.4" fill="none" stroke="#111" stroke-width="0.8" />
<path d="M1043.4,810 H1054.4" fill="none" stroke="#111" stroke-width="0.8" />
<path d="M1042.6,842 L1044.1999999999998,840 H1052.0 L1053.6,842 V876 L1052.0,878 H1044.1999999999998 L1042.6,876 Z" fill="#fff" stroke="#111" stroke-width="0.9" />
<path d="M1042.6,850 H1053.6" fill="none" stroke="#111" stroke-width="0.8" />
<path d="M1042.6,862 H1053.6" fill="none" stroke="#111" stroke-width="0.8" />
<path d="M1042.6,870 H1053.6" fill="none" stroke="#111" stroke-width="0.8" />
<path d="M1048.6,768 V790.4 M1048.4,818 V840" fill="none" stroke="#111" stroke-width="0.6" />
<circle cx="1049.4" cy="774" r="1" fill="none" stroke="#111" stroke-width="0.6"/><circle cx="1049" cy="833" r="1" fill="none" stroke="#111" stroke-width="0.6"/></g>
<g font-size="7.8" fill="#222" text-anchor="middle"><text x="862.6" y="760.6">L</text><text x="948.8" y="762.6">R</text><text x="862" y="848">T</text><text x="948.4" y="817">P</text></g>
<!--/D3-->
<!--D4--><g id="d4">
<path d="M1127,657.3 L1108.9,657.1 L1104,937.9 L1250.5,938 L1255.2,658.5 L1233,658.3" fill="none" stroke="#111" stroke-width="0.8" stroke-dasharray="16 3 3 3"/>
<path d="M1131,657.4 L1226,658.2" fill="none" stroke="#111" stroke-width="0.8" stroke-dasharray="13 4"/>
<path d="M1127.1,646.4 V731.6 H1168.8 V747 M1229.6,648 V733.2 H1186.2 V747" fill="none" stroke="#111" stroke-width="0.9" />
<path d="M1138.4,740.6 H1215.7 M1138.4,743.2 H1215.7 M1138.4,761.8 H1215.7 M1138.4,764.4 H1215.7 M1138.4,740.6 V764.4 M1215.7,743.2 V761.8 M1164.5,743.2 V761.8 M1189.7,743.2 V761.8" fill="none" stroke="#111" stroke-width="1" />
<path d="M1147,761.8 L1143.6,745 M1159.4,745 V760 M1142.6,761.8 V756.6 H1153.4 V761.8" fill="none" stroke="#111" stroke-width="0.9" />
<path d="M1143.2,743.8 l2.4,3.6 l-3,0.6 z M1159.4,761.6 l-1.4,-3.6 h2.8 z" fill="#000"/><path d="M1190.6,744 L1210,761 M1204.6,761.4 L1211.4,746 M1194,761.8 V756.4 H1202.4 V761.8" fill="none" stroke="#111" stroke-width="0.9" />
<path d="M1212,744.4 l-0.4,4.2 l-2.8,-1.4 z M1202.4,761.4 l-1.4,-3.2 h2.8 z M1210.4,761.4 l-3.6,-1 l2,-2.2 z" fill="#000"/><path d="M1168.8,761.8 V755.6 H1184.6 V761.8 M1173.2,757 V791.4 M1178,757 V791.4 M1171.6,757 H1179.6" fill="none" stroke="#111" stroke-width="0.9" />
<path d="M1215.7,753.2 H1231 M1218,749.6 V757 M1220.4,749.6 L1222.6,757 L1224.8,749.6 L1227,757 M1227,749.6 V757" fill="none" stroke="#111" stroke-width="1.2" />
<circle cx="1234.3" cy="753.5" r="3.9" fill="#fff" stroke="#111" stroke-width="1"/><path d="M1232.4,757 V847 M1236.2,757 V847" fill="none" stroke="#111" stroke-width="0.9" />
<path d="M1128.4,768 L1130.4,775.6 L1132.8,768.4 L1134.8,775.4 L1137.4,767.6" fill="none" stroke="#111" stroke-width="1.1" />
<path d="M1138.4,764.4 V790 M1142.2,764.4 V790 M1138.2,797.6 V847 M1142,797.6 V847" fill="none" stroke="#111" stroke-width="0.9" />
<circle cx="1139.9" cy="793.8" r="3.8" fill="#fff" stroke="#111" stroke-width="1"/><path d="M1168.2,764.4 V772.4 H1148 V783.5 M1148,783.5 H1203.4 V791 M1184.5,764.4 V783.5 M1147.2,783.5 V860.6 H1117.2 V916 M1202.7,791 V944" fill="none" stroke="#111" stroke-width="0.9" />
<circle cx="1148" cy="783.5" r="1.6" fill="#000"/><circle cx="1184.5" cy="783.5" r="1.6" fill="#000"/><circle cx="1160.2" cy="783.5" r="4.2" fill="#fff" stroke="#111" stroke-width="1"/><path d="M1157.4,780.6 L1160.2,786.4 L1163,780.6" fill="none" stroke="#111" stroke-width="0.8" />
<path d="M1173.2,792.2 H1155 V815.6 H1160 M1178,792.2 H1197.5 V815.6 H1191" fill="none" stroke="#111" stroke-width="0.9" />
<circle cx="1175.4" cy="816.3" r="15.9" fill="#fff" stroke="#111" stroke-width="1"/><path d="M1160.2,816.2 l4.8,-3.4 v6.8 z M1169.6,816.2 l-4.8,-3.4 v6.8 z M1190.8,816.2 l-4.8,-3.4 v6.8 z M1181.4,816.2 l4.8,-3.4 v6.8 z" fill="#000"/><path d="M1172.8,832 V847.6 M1177.6,832 V847.6 M1172.8,854.4 V943 M1177.6,854.4 V943" fill="none" stroke="#111" stroke-width="0.9" />
<path d="M1142,848.4 H1229 M1142,852.4 H1229" fill="none" stroke="#111" stroke-width="1" />
<circle cx="1138.8" cy="850.3" r="4" fill="#fff" stroke="#111" stroke-width="1"/><circle cx="1175" cy="850.3" r="4" fill="#fff" stroke="#111" stroke-width="1"/><circle cx="1232.4" cy="851" r="4" fill="#fff" stroke="#111" stroke-width="1"/><path d="M1131.6,815.6 Q1139.6,811.6 1147.6,816 M1225,816.4 Q1233,811.6 1241,816.6" fill="none" stroke="#111" stroke-width="1" />
<path d="M1147.2,835.6 l-1.6,4.4 h3.2 z M1202.7,839.6 l-1.6,-4.4 h3.2 z M1131.2,816 l3.6,-2.4 l0.4,3 z M1241.4,817 l-3.8,-2 l2.6,-1.6 z" fill="#000"/><path d="M1117.2,891.2 H1140.5 M1157.5,891.2 H1202.2" fill="none" stroke="#111" stroke-width="0.9" />
<path d="M1140.5,883.2 H1157.5 V899.7 H1140.5 Z" fill="#fff" stroke="#111" stroke-width="1.1" />
<rect x="1140.5" y="896.4" width="17" height="3.3" fill="#000"/><path d="M1142,896.4 H1156" fill="none" stroke="#111" stroke-width="0.6" stroke="#fff"/>
<path d="M1148.6,875 L1142,876.4 L1148.6,878 L1142,879.6 L1148.6,881.4 L1148.6,883" fill="none" stroke="#111" stroke-width="1.2" />
<path d="M1154,883.2 V874.6 H1166.6 V890" fill="none" stroke="#111" stroke-width="0.9" stroke-dasharray="3 1.6"/>
<path d="M1134.6,892.6 V908.4 H1149.8 V899.7" fill="none" stroke="#111" stroke-width="0.9" stroke-dasharray="3 1.6"/>
<circle cx="1117.2" cy="891.2" r="1.6" fill="#000"/><circle cx="1134.6" cy="891.2" r="1.6" fill="#000"/><circle cx="1166.2" cy="891.4" r="1.6" fill="#000"/><circle cx="1202.2" cy="891.5" r="1.6" fill="#000"/><path d="M1114.6,916.4 L1119,918.6 L1114.6,920.8 L1119,922.6" fill="none" stroke="#111" stroke-width="1.1" />
<circle cx="1116.8" cy="915.6" r="1.3" fill="#000"/><circle cx="1116.7" cy="926.7" r="4" fill="#fff" stroke="#111" stroke-width="1"/><path d="M1112,926.7 L1116.7,931.6 L1121.4,926.7" fill="none" stroke="#111" stroke-width="0.8" />
<path d="M1116.4,930.6 V942" fill="none" stroke="#111" stroke-width="0.9" />
</g>
<g font-size="7" fill="#222" text-anchor="middle"><text x="1118.4" y="650.4">L</text><text x="1239" y="651">R</text><text x="1116" y="952">P</text><text x="1201.6" y="953">T</text></g>
<!--/D4-->
</svg></div>

</body></html>
